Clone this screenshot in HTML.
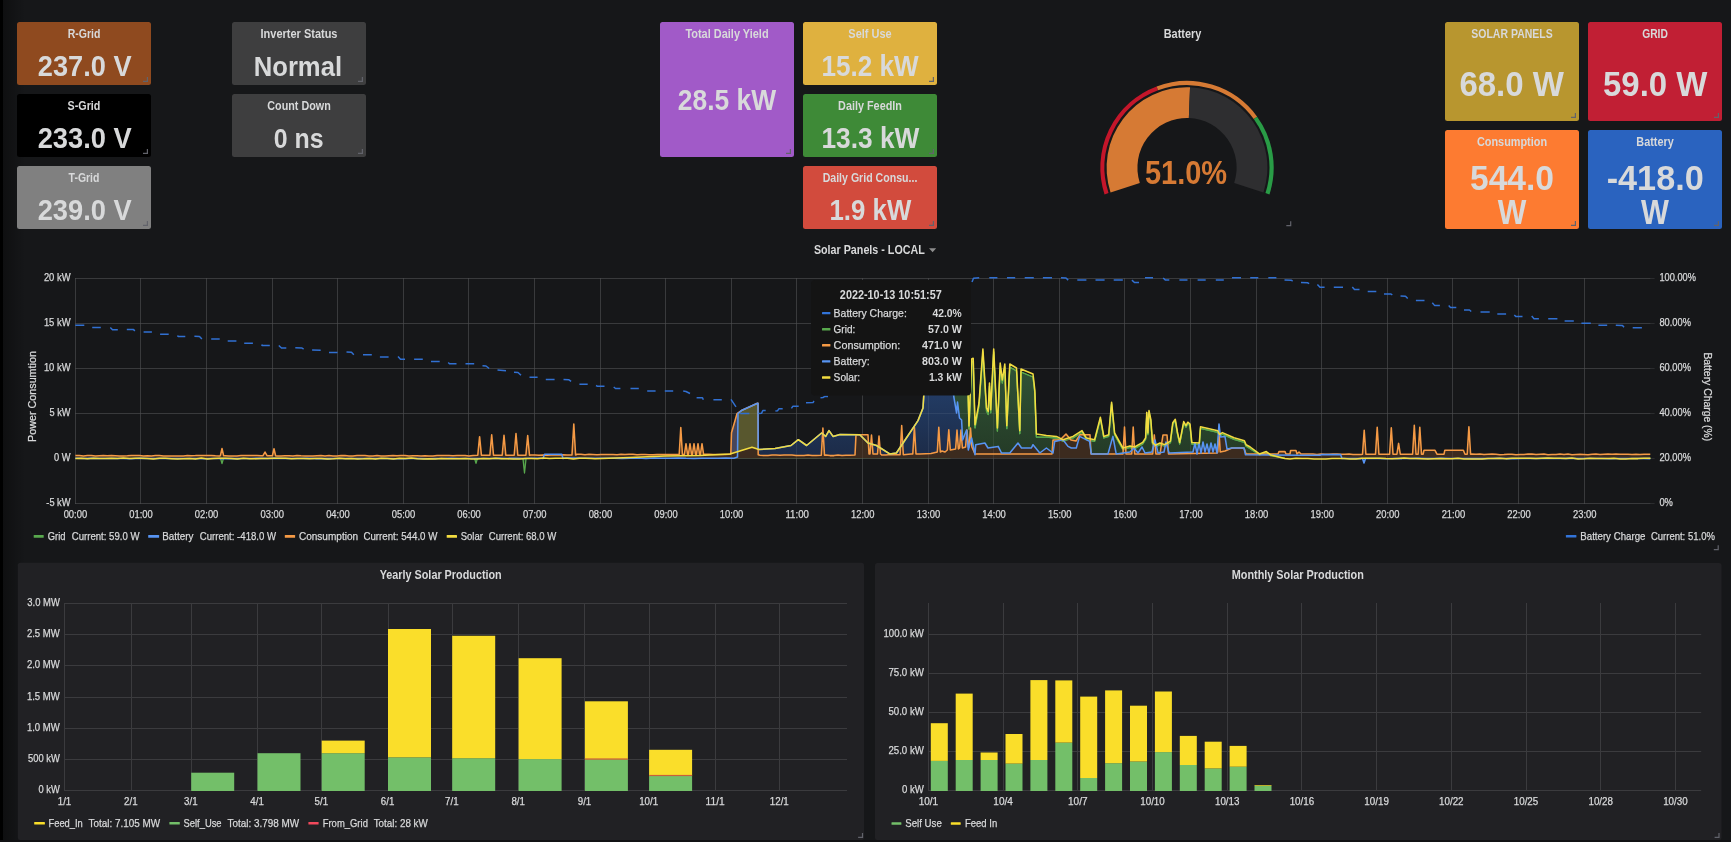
<!DOCTYPE html>
<html><head><meta charset="utf-8"><title>Solar Dashboard</title>
<style>html,body{margin:0;padding:0;background:#161719;overflow:hidden;width:1731px;height:842px}
svg{display:block;font-family:"Liberation Sans", sans-serif;will-change:transform}</style></head>
<body><svg width="1731" height="842" viewBox="0 0 1731 842">
<rect x="0" y="0" width="1731" height="842" fill="#161719"/>
<defs><linearGradient id="lsh" x1="0" y1="0" x2="1" y2="0"><stop offset="0" stop-color="#000" stop-opacity="0.35"/><stop offset="1" stop-color="#000" stop-opacity="0"/></linearGradient><linearGradient id="lshv" x1="0" y1="0" x2="0" y2="1"><stop offset="0" stop-color="#000" stop-opacity="0.2"/><stop offset="1" stop-color="#000" stop-opacity="1"/></linearGradient></defs>
<rect x="3" y="0" width="22" height="842" fill="url(#lsh)"/>
<rect x="0" y="0" width="3" height="842" fill="#000"/>
<rect x="17" y="22" width="134" height="63" rx="2.5" fill="#8f4a1f"/>
<text x="84.0" y="38.1" font-size="13.0" font-weight="bold" fill="#d8d9da" text-anchor="middle" textLength="32.7" lengthAdjust="spacingAndGlyphs" >R-Grid</text>
<text x="84.7" y="76.1" font-size="29.6" font-weight="bold" fill="#d8d9da" text-anchor="middle" textLength="93.8" lengthAdjust="spacingAndGlyphs" >237.0 V</text>
<path d="M143.0 81.4H147.4V77.0" stroke="#62636b" stroke-width="1.2" fill="none"/>
<rect x="17" y="94" width="134" height="63" rx="2.5" fill="#000000"/>
<text x="84.0" y="110.1" font-size="13.0" font-weight="bold" fill="#d8d9da" text-anchor="middle" textLength="32.8" lengthAdjust="spacingAndGlyphs" >S-Grid</text>
<text x="84.7" y="148.1" font-size="29.6" font-weight="bold" fill="#d8d9da" text-anchor="middle" textLength="94.1" lengthAdjust="spacingAndGlyphs" >233.0 V</text>
<path d="M143.0 153.4H147.4V149.0" stroke="#62636b" stroke-width="1.2" fill="none"/>
<rect x="17" y="166" width="134" height="63" rx="2.5" fill="#808080"/>
<text x="84.0" y="182.1" font-size="13.0" font-weight="bold" fill="#d8d9da" text-anchor="middle" textLength="30.8" lengthAdjust="spacingAndGlyphs" >T-Grid</text>
<text x="84.7" y="220.1" font-size="29.6" font-weight="bold" fill="#d8d9da" text-anchor="middle" textLength="94.1" lengthAdjust="spacingAndGlyphs" >239.0 V</text>
<path d="M143.0 225.4H147.4V221.0" stroke="#62636b" stroke-width="1.2" fill="none"/>
<rect x="232" y="22" width="134" height="63" rx="2.5" fill="#3e3e3f"/>
<text x="299.0" y="38.1" font-size="13.0" font-weight="bold" fill="#d8d9da" text-anchor="middle" textLength="77.0" lengthAdjust="spacingAndGlyphs" >Inverter Status</text>
<text x="297.9" y="76.3" font-size="27.8" font-weight="bold" fill="#d8d9da" text-anchor="middle" textLength="88.4" lengthAdjust="spacingAndGlyphs" >Normal</text>
<path d="M358.0 81.4H362.4V77.0" stroke="#62636b" stroke-width="1.2" fill="none"/>
<rect x="232" y="94" width="134" height="63" rx="2.5" fill="#3e3e3f"/>
<text x="299.0" y="110.1" font-size="13.0" font-weight="bold" fill="#d8d9da" text-anchor="middle" textLength="63.5" lengthAdjust="spacingAndGlyphs" >Count Down</text>
<text x="298.6" y="148.3" font-size="27.8" font-weight="bold" fill="#d8d9da" text-anchor="middle" textLength="49.9" lengthAdjust="spacingAndGlyphs" >0 ns</text>
<path d="M358.0 153.4H362.4V149.0" stroke="#62636b" stroke-width="1.2" fill="none"/>
<rect x="660" y="22" width="134" height="135" rx="2.5" fill="#a15ac8"/>
<text x="727.0" y="38.1" font-size="13.0" font-weight="bold" fill="#d8d9da" text-anchor="middle" textLength="83.2" lengthAdjust="spacingAndGlyphs" >Total Daily Yield</text>
<text x="727.0" y="109.7" font-size="29.6" font-weight="bold" fill="#d8d9da" text-anchor="middle" textLength="98.3" lengthAdjust="spacingAndGlyphs" >28.5 kW</text>
<path d="M786.0 153.4H790.4V149.0" stroke="#62636b" stroke-width="1.2" fill="none"/>
<rect x="803" y="22" width="134" height="63" rx="2.5" fill="#dfb13f"/>
<text x="870.0" y="38.1" font-size="13.0" font-weight="bold" fill="#d8d9da" text-anchor="middle" textLength="43.4" lengthAdjust="spacingAndGlyphs" >Self Use</text>
<text x="870.1" y="76.3" font-size="29.6" font-weight="bold" fill="#d8d9da" text-anchor="middle" textLength="97.2" lengthAdjust="spacingAndGlyphs" >15.2 kW</text>
<path d="M929.0 81.4H933.4V77.0" stroke="#62636b" stroke-width="1.2" fill="none"/>
<rect x="803" y="94" width="134" height="63" rx="2.5" fill="#3e8a37"/>
<text x="870.0" y="110.1" font-size="13.0" font-weight="bold" fill="#d8d9da" text-anchor="middle" textLength="63.8" lengthAdjust="spacingAndGlyphs" >Daily FeedIn</text>
<text x="870.4" y="148.3" font-size="29.6" font-weight="bold" fill="#d8d9da" text-anchor="middle" textLength="97.8" lengthAdjust="spacingAndGlyphs" >13.3 kW</text>
<path d="M929.0 153.4H933.4V149.0" stroke="#62636b" stroke-width="1.2" fill="none"/>
<rect x="803" y="166" width="134" height="63" rx="2.5" fill="#d24b3d"/>
<text x="870.0" y="182.1" font-size="13.0" font-weight="bold" fill="#d8d9da" text-anchor="middle" textLength="94.7" lengthAdjust="spacingAndGlyphs" >Daily Grid Consu...</text>
<text x="870.4" y="220.2" font-size="29.6" font-weight="bold" fill="#d8d9da" text-anchor="middle" textLength="81.8" lengthAdjust="spacingAndGlyphs" >1.9 kW</text>
<path d="M929.0 225.4H933.4V221.0" stroke="#62636b" stroke-width="1.2" fill="none"/>
<rect x="1445" y="22" width="134" height="99" rx="2.5" fill="#b8962f"/>
<text x="1512.0" y="37.8" font-size="13.0" font-weight="bold" fill="#d8d9da" text-anchor="middle" textLength="81.5" lengthAdjust="spacingAndGlyphs" >SOLAR PANELS</text>
<text x="1511.7" y="95.5" font-size="35.0" font-weight="bold" fill="#d8d9da" text-anchor="middle" textLength="104.6" lengthAdjust="spacingAndGlyphs" >68.0 W</text>
<path d="M1571.0 117.4H1575.4V113.0" stroke="#62636b" stroke-width="1.2" fill="none"/>
<rect x="1588" y="22" width="134" height="99" rx="2.5" fill="#c11f34"/>
<text x="1655.0" y="37.8" font-size="13.0" font-weight="bold" fill="#d8d9da" text-anchor="middle" textLength="25.7" lengthAdjust="spacingAndGlyphs" >GRID</text>
<text x="1655.2" y="95.5" font-size="35.0" font-weight="bold" fill="#d8d9da" text-anchor="middle" textLength="104.4" lengthAdjust="spacingAndGlyphs" >59.0 W</text>
<path d="M1714.0 117.4H1718.4V113.0" stroke="#62636b" stroke-width="1.2" fill="none"/>
<rect x="1445" y="130" width="134" height="99" rx="2.5" fill="#fd7b31"/>
<text x="1512.0" y="146.0" font-size="13.0" font-weight="bold" fill="#d8d9da" text-anchor="middle" textLength="70.1" lengthAdjust="spacingAndGlyphs" >Consumption</text>
<text x="1512.0" y="190.4" font-size="35.0" font-weight="bold" fill="#d8d9da" text-anchor="middle" textLength="84.1" lengthAdjust="spacingAndGlyphs" >544.0</text>
<text x="1512.1" y="223.8" font-size="35.0" font-weight="bold" fill="#d8d9da" text-anchor="middle" textLength="28.6" lengthAdjust="spacingAndGlyphs" >W</text>
<path d="M1571.0 225.4H1575.4V221.0" stroke="#62636b" stroke-width="1.2" fill="none"/>
<rect x="1588" y="130" width="134" height="99" rx="2.5" fill="#2a63bf"/>
<text x="1655.0" y="146.0" font-size="13.0" font-weight="bold" fill="#d8d9da" text-anchor="middle" textLength="37.4" lengthAdjust="spacingAndGlyphs" >Battery</text>
<text x="1655.2" y="190.4" font-size="35.0" font-weight="bold" fill="#d8d9da" text-anchor="middle" textLength="97.0" lengthAdjust="spacingAndGlyphs" >-418.0</text>
<text x="1655.0" y="223.8" font-size="35.0" font-weight="bold" fill="#d8d9da" text-anchor="middle" textLength="27.9" lengthAdjust="spacingAndGlyphs" >W</text>
<path d="M1714.0 225.4H1718.4V221.0" stroke="#62636b" stroke-width="1.2" fill="none"/>
<text x="1182.5" y="38.1" font-size="13.0" font-weight="bold" fill="#d8d9da" text-anchor="middle" textLength="37.7" lengthAdjust="spacingAndGlyphs" >Battery</text>
<path d="M1106.54 193.74A84.6 84.6 0 0 1 1157.34 88.37" stroke="#c4162a" stroke-width="4.2" fill="none"/>
<path d="M1157.34 88.37A84.6 84.6 0 0 1 1255.44 117.87" stroke="#d67a34" stroke-width="4.2" fill="none"/>
<path d="M1255.44 117.87A84.6 84.6 0 0 1 1267.46 193.74" stroke="#299c46" stroke-width="4.2" fill="none"/>
<path d="M1110.54 192.44A80.4 80.4 0 0 1 1190.03 87.26L1188.87 118.04A49.6 49.6 0 0 0 1139.83 182.93Z" fill="#d67a34"/>
<path d="M1190.03 87.26A80.4 80.4 0 0 1 1263.46 192.44L1234.17 182.93A49.6 49.6 0 0 0 1188.87 118.04Z" fill="#2e2e30"/>
<text x="1186.0" y="184.2" font-size="33.2" font-weight="bold" fill="#d67a34" text-anchor="middle" textLength="82.2" lengthAdjust="spacingAndGlyphs" >51.0%</text>
<path d="M1286.3 225.6H1290.7V221.2" stroke="#62636b" stroke-width="1.2" fill="none"/>
<text x="813.9" y="254.0" font-size="12.6" font-weight="bold" fill="#d8d9da" text-anchor="start" textLength="110.9" lengthAdjust="spacingAndGlyphs" >Solar Panels - LOCAL</text>
<path d="M929 248.2H936.2L932.6 252.2Z" fill="#8e8e8e"/>
<path d="M75.0 278.5H1654.6" stroke="#2b2c2e" stroke-width="1"/>
<path d="M75.0 323.5H1654.6" stroke="#2b2c2e" stroke-width="1"/>
<path d="M75.0 368.5H1654.6" stroke="#2b2c2e" stroke-width="1"/>
<path d="M75.0 413.5H1654.6" stroke="#2b2c2e" stroke-width="1"/>
<path d="M75.0 458.5H1654.6" stroke="#2b2c2e" stroke-width="1"/>
<path d="M75.0 503.5H1654.6" stroke="#2b2c2e" stroke-width="1"/>
<path d="M75.5 278.0V504.0" stroke="#2b2c2e" stroke-width="1"/>
<path d="M140.5 278.0V504.0" stroke="#2b2c2e" stroke-width="1"/>
<path d="M206.5 278.0V504.0" stroke="#2b2c2e" stroke-width="1"/>
<path d="M272.5 278.0V504.0" stroke="#2b2c2e" stroke-width="1"/>
<path d="M337.5 278.0V504.0" stroke="#2b2c2e" stroke-width="1"/>
<path d="M403.5 278.0V504.0" stroke="#2b2c2e" stroke-width="1"/>
<path d="M468.5 278.0V504.0" stroke="#2b2c2e" stroke-width="1"/>
<path d="M534.5 278.0V504.0" stroke="#2b2c2e" stroke-width="1"/>
<path d="M600.5 278.0V504.0" stroke="#2b2c2e" stroke-width="1"/>
<path d="M665.5 278.0V504.0" stroke="#2b2c2e" stroke-width="1"/>
<path d="M731.5 278.0V504.0" stroke="#2b2c2e" stroke-width="1"/>
<path d="M796.5 278.0V504.0" stroke="#2b2c2e" stroke-width="1"/>
<path d="M862.5 278.0V504.0" stroke="#2b2c2e" stroke-width="1"/>
<path d="M928.5 278.0V504.0" stroke="#2b2c2e" stroke-width="1"/>
<path d="M993.5 278.0V504.0" stroke="#2b2c2e" stroke-width="1"/>
<path d="M1059.5 278.0V504.0" stroke="#2b2c2e" stroke-width="1"/>
<path d="M1124.5 278.0V504.0" stroke="#2b2c2e" stroke-width="1"/>
<path d="M1190.5 278.0V504.0" stroke="#2b2c2e" stroke-width="1"/>
<path d="M1256.5 278.0V504.0" stroke="#2b2c2e" stroke-width="1"/>
<path d="M1321.5 278.0V504.0" stroke="#2b2c2e" stroke-width="1"/>
<path d="M1387.5 278.0V504.0" stroke="#2b2c2e" stroke-width="1"/>
<path d="M1452.5 278.0V504.0" stroke="#2b2c2e" stroke-width="1"/>
<path d="M1518.5 278.0V504.0" stroke="#2b2c2e" stroke-width="1"/>
<path d="M1584.5 278.0V504.0" stroke="#2b2c2e" stroke-width="1"/>
<text x="70.5" y="281.1" font-size="10.2" font-weight="normal" fill="#d8d9da" text-anchor="end" textLength="26.6" lengthAdjust="spacingAndGlyphs" stroke="#d8d9da" stroke-width="0.25" >20 kW</text>
<text x="70.5" y="326.1" font-size="10.2" font-weight="normal" fill="#d8d9da" text-anchor="end" textLength="26.6" lengthAdjust="spacingAndGlyphs" stroke="#d8d9da" stroke-width="0.25" >15 kW</text>
<text x="70.5" y="371.1" font-size="10.2" font-weight="normal" fill="#d8d9da" text-anchor="end" textLength="26.6" lengthAdjust="spacingAndGlyphs" stroke="#d8d9da" stroke-width="0.25" >10 kW</text>
<text x="70.5" y="416.1" font-size="10.2" font-weight="normal" fill="#d8d9da" text-anchor="end" textLength="21.0" lengthAdjust="spacingAndGlyphs" stroke="#d8d9da" stroke-width="0.25" >5 kW</text>
<text x="70.5" y="461.1" font-size="10.2" font-weight="normal" fill="#d8d9da" text-anchor="end" textLength="16.5" lengthAdjust="spacingAndGlyphs" stroke="#d8d9da" stroke-width="0.25" >0 W</text>
<text x="70.5" y="506.1" font-size="10.2" font-weight="normal" fill="#d8d9da" text-anchor="end" textLength="24.2" lengthAdjust="spacingAndGlyphs" stroke="#d8d9da" stroke-width="0.25" >-5 kW</text>
<text x="1659.4" y="281.1" font-size="10.2" font-weight="normal" fill="#d8d9da" text-anchor="start" textLength="36.5" lengthAdjust="spacingAndGlyphs" stroke="#d8d9da" stroke-width="0.25" >100.00%</text>
<text x="1659.4" y="326.1" font-size="10.2" font-weight="normal" fill="#d8d9da" text-anchor="start" textLength="31.5" lengthAdjust="spacingAndGlyphs" stroke="#d8d9da" stroke-width="0.25" >80.00%</text>
<text x="1659.4" y="371.1" font-size="10.2" font-weight="normal" fill="#d8d9da" text-anchor="start" textLength="31.5" lengthAdjust="spacingAndGlyphs" stroke="#d8d9da" stroke-width="0.25" >60.00%</text>
<text x="1659.4" y="416.1" font-size="10.2" font-weight="normal" fill="#d8d9da" text-anchor="start" textLength="31.5" lengthAdjust="spacingAndGlyphs" stroke="#d8d9da" stroke-width="0.25" >40.00%</text>
<text x="1659.4" y="461.1" font-size="10.2" font-weight="normal" fill="#d8d9da" text-anchor="start" textLength="31.5" lengthAdjust="spacingAndGlyphs" stroke="#d8d9da" stroke-width="0.25" >20.00%</text>
<text x="1659.4" y="506.1" font-size="10.2" font-weight="normal" fill="#d8d9da" text-anchor="start" textLength="13.5" lengthAdjust="spacingAndGlyphs" stroke="#d8d9da" stroke-width="0.25" >0%</text>
<text x="75.4" y="518.2" font-size="10.2" font-weight="normal" fill="#d8d9da" text-anchor="middle" textLength="23.5" lengthAdjust="spacingAndGlyphs" stroke="#d8d9da" stroke-width="0.25" >00:00</text>
<text x="141.0" y="518.2" font-size="10.2" font-weight="normal" fill="#d8d9da" text-anchor="middle" textLength="23.5" lengthAdjust="spacingAndGlyphs" stroke="#d8d9da" stroke-width="0.25" >01:00</text>
<text x="206.6" y="518.2" font-size="10.2" font-weight="normal" fill="#d8d9da" text-anchor="middle" textLength="23.5" lengthAdjust="spacingAndGlyphs" stroke="#d8d9da" stroke-width="0.25" >02:00</text>
<text x="272.3" y="518.2" font-size="10.2" font-weight="normal" fill="#d8d9da" text-anchor="middle" textLength="23.5" lengthAdjust="spacingAndGlyphs" stroke="#d8d9da" stroke-width="0.25" >03:00</text>
<text x="337.9" y="518.2" font-size="10.2" font-weight="normal" fill="#d8d9da" text-anchor="middle" textLength="23.5" lengthAdjust="spacingAndGlyphs" stroke="#d8d9da" stroke-width="0.25" >04:00</text>
<text x="403.5" y="518.2" font-size="10.2" font-weight="normal" fill="#d8d9da" text-anchor="middle" textLength="23.5" lengthAdjust="spacingAndGlyphs" stroke="#d8d9da" stroke-width="0.25" >05:00</text>
<text x="469.1" y="518.2" font-size="10.2" font-weight="normal" fill="#d8d9da" text-anchor="middle" textLength="23.5" lengthAdjust="spacingAndGlyphs" stroke="#d8d9da" stroke-width="0.25" >06:00</text>
<text x="534.7" y="518.2" font-size="10.2" font-weight="normal" fill="#d8d9da" text-anchor="middle" textLength="23.5" lengthAdjust="spacingAndGlyphs" stroke="#d8d9da" stroke-width="0.25" >07:00</text>
<text x="600.4" y="518.2" font-size="10.2" font-weight="normal" fill="#d8d9da" text-anchor="middle" textLength="23.5" lengthAdjust="spacingAndGlyphs" stroke="#d8d9da" stroke-width="0.25" >08:00</text>
<text x="666.0" y="518.2" font-size="10.2" font-weight="normal" fill="#d8d9da" text-anchor="middle" textLength="23.5" lengthAdjust="spacingAndGlyphs" stroke="#d8d9da" stroke-width="0.25" >09:00</text>
<text x="731.6" y="518.2" font-size="10.2" font-weight="normal" fill="#d8d9da" text-anchor="middle" textLength="23.5" lengthAdjust="spacingAndGlyphs" stroke="#d8d9da" stroke-width="0.25" >10:00</text>
<text x="797.2" y="518.2" font-size="10.2" font-weight="normal" fill="#d8d9da" text-anchor="middle" textLength="23.5" lengthAdjust="spacingAndGlyphs" stroke="#d8d9da" stroke-width="0.25" >11:00</text>
<text x="862.8" y="518.2" font-size="10.2" font-weight="normal" fill="#d8d9da" text-anchor="middle" textLength="23.5" lengthAdjust="spacingAndGlyphs" stroke="#d8d9da" stroke-width="0.25" >12:00</text>
<text x="928.5" y="518.2" font-size="10.2" font-weight="normal" fill="#d8d9da" text-anchor="middle" textLength="23.5" lengthAdjust="spacingAndGlyphs" stroke="#d8d9da" stroke-width="0.25" >13:00</text>
<text x="994.1" y="518.2" font-size="10.2" font-weight="normal" fill="#d8d9da" text-anchor="middle" textLength="23.5" lengthAdjust="spacingAndGlyphs" stroke="#d8d9da" stroke-width="0.25" >14:00</text>
<text x="1059.7" y="518.2" font-size="10.2" font-weight="normal" fill="#d8d9da" text-anchor="middle" textLength="23.5" lengthAdjust="spacingAndGlyphs" stroke="#d8d9da" stroke-width="0.25" >15:00</text>
<text x="1125.3" y="518.2" font-size="10.2" font-weight="normal" fill="#d8d9da" text-anchor="middle" textLength="23.5" lengthAdjust="spacingAndGlyphs" stroke="#d8d9da" stroke-width="0.25" >16:00</text>
<text x="1190.9" y="518.2" font-size="10.2" font-weight="normal" fill="#d8d9da" text-anchor="middle" textLength="23.5" lengthAdjust="spacingAndGlyphs" stroke="#d8d9da" stroke-width="0.25" >17:00</text>
<text x="1256.6" y="518.2" font-size="10.2" font-weight="normal" fill="#d8d9da" text-anchor="middle" textLength="23.5" lengthAdjust="spacingAndGlyphs" stroke="#d8d9da" stroke-width="0.25" >18:00</text>
<text x="1322.2" y="518.2" font-size="10.2" font-weight="normal" fill="#d8d9da" text-anchor="middle" textLength="23.5" lengthAdjust="spacingAndGlyphs" stroke="#d8d9da" stroke-width="0.25" >19:00</text>
<text x="1387.8" y="518.2" font-size="10.2" font-weight="normal" fill="#d8d9da" text-anchor="middle" textLength="23.5" lengthAdjust="spacingAndGlyphs" stroke="#d8d9da" stroke-width="0.25" >20:00</text>
<text x="1453.4" y="518.2" font-size="10.2" font-weight="normal" fill="#d8d9da" text-anchor="middle" textLength="23.5" lengthAdjust="spacingAndGlyphs" stroke="#d8d9da" stroke-width="0.25" >21:00</text>
<text x="1519.0" y="518.2" font-size="10.2" font-weight="normal" fill="#d8d9da" text-anchor="middle" textLength="23.5" lengthAdjust="spacingAndGlyphs" stroke="#d8d9da" stroke-width="0.25" >22:00</text>
<text x="1584.7" y="518.2" font-size="10.2" font-weight="normal" fill="#d8d9da" text-anchor="middle" textLength="23.5" lengthAdjust="spacingAndGlyphs" stroke="#d8d9da" stroke-width="0.25" >23:00</text>
<text x="0.0" y="0.0" font-size="11.6" font-weight="normal" fill="#d8d9da" text-anchor="middle" textLength="90.8" lengthAdjust="spacingAndGlyphs" stroke="#d8d9da" stroke-width="0.25" transform="translate(35.6 396.5) rotate(-90)">Power Consumtion</text>
<text x="0.0" y="0.0" font-size="11.6" font-weight="normal" fill="#d8d9da" text-anchor="middle" textLength="88.8" lengthAdjust="spacingAndGlyphs" stroke="#d8d9da" stroke-width="0.25" transform="translate(1704.4 396.8) rotate(90)">Battery Charge (%)</text>
<defs><linearGradient id="gG" gradientUnits="userSpaceOnUse" x1="0" y1="345" x2="0" y2="458"><stop offset="0" stop-color="#33593a"/><stop offset="1" stop-color="#243a26"/></linearGradient><linearGradient id="gB" gradientUnits="userSpaceOnUse" x1="0" y1="375" x2="0" y2="458"><stop offset="0" stop-color="#24406c"/><stop offset="1" stop-color="#1c2b47"/></linearGradient></defs>
<path d="M75.4 458.0 L83.4 458.0 L91.4 457.6 L99.4 457.7 L107.4 457.8 L115.4 458.0 L123.4 457.8 L131.4 457.9 L139.4 457.6 L147.4 457.6 L155.4 457.8 L163.4 458.0 L171.4 458.0 L179.4 458.0 L187.4 457.8 L195.4 457.9 L203.4 457.9 L211.4 457.9 L220.4 457.9 L222.0 463.6 L223.6 457.9 L272.0 457.9 L274.0 454.5 L276.0 457.9 L280.0 457.7 L288.0 458.1 L296.0 457.7 L304.0 458.2 L312.0 458.2 L320.0 457.6 L328.0 457.9 L336.0 458.1 L344.0 458.2 L352.0 457.9 L360.0 457.8 L368.0 457.7 L376.0 458.2 L384.0 457.7 L392.0 457.9 L400.0 457.7 L408.0 457.9 L416.0 458.2 L424.0 457.7 L432.0 458.1 L440.0 457.9 L448.0 458.1 L456.0 458.0 L464.0 457.7 L472.0 458.1 L474.4 457.9 L476.0 463.3 L477.6 457.9 L480.0 457.9 L488.0 457.6 L496.0 457.6 L504.0 457.9 L512.0 457.9 L520.0 457.8 L522.9 457.9 L524.5 473.0 L526.1 457.9 L528.0 457.7 L536.0 457.8 L544.0 457.8 L552.0 458.1 L560.0 457.6 L568.0 458.1 L576.0 458.1 L584.0 457.7 L592.0 458.2 L600.0 458.0 L608.0 458.1 L616.0 457.8 L624.0 457.8 L632.0 457.8 L640.0 458.2 L648.0 458.0 L656.0 457.8 L664.0 457.9 L672.0 457.8 L680.0 457.6 L688.0 457.7 L696.0 458.1 L704.0 457.8 L712.0 458.2 L720.0 457.7 L728.0 457.8 L736.0 457.9 L744.0 457.7 L752.0 457.8 L760.0 458.2 L768.0 458.1 L776.0 458.1 L784.0 458.0 L792.0 458.1 L800.0 458.2 L808.0 457.9 L816.0 458.0 L824.0 457.6 L832.0 458.0 L840.0 457.9 L848.0 458.1 L856.0 458.0 L864.0 457.8 L872.0 457.6 L880.0 458.2 L888.0 457.7 L896.0 457.9 L904.0 457.8 L912.0 457.8 L920.0 458.0 L928.0 458.2 L936.0 457.8 L944.0 458.0 L950.0 457.9 L954.0 390.0 L968.0 390.0 L969.0 429.0 L971.6 362.0 L973.2 361.3 L975.0 427.8 L979.0 406.0 L982.9 352.0 L986.5 411.0 L988.2 414.5 L989.5 386.0 L990.7 412.8 L993.7 352.0 L997.4 431.0 L1000.2 366.0 L1002.3 383.0 L1004.8 367.0 L1006.8 428.6 L1009.8 367.0 L1016.5 371.0 L1019.8 433.6 L1021.0 372.0 L1033.0 377.0 L1034.8 393.0 L1036.4 437.0 L1046.4 437.2 L1056.4 438.0 L1063.0 441.3 L1073.0 438.0 L1082.0 432.2 L1086.3 439.6 L1094.6 441.3 L1100.4 418.9 L1103.8 438.0 L1108.7 436.3 L1111.6 403.9 L1114.6 434.6 L1122.9 449.6 L1130.0 447.5 L1134.6 448.6 L1142.7 444.0 L1145.6 439.4 L1146.8 414.0 L1147.9 434.6 L1149.0 412.2 L1150.8 420.9 L1152.5 444.0 L1155.4 446.9 L1160.0 444.6 L1164.7 446.3 L1170.4 442.8 L1172.8 424.3 L1175.3 420.9 L1177.4 433.6 L1179.7 444.0 L1183.7 423.2 L1186.0 427.2 L1187.8 423.8 L1190.0 425.6 L1191.8 444.0 L1199.3 444.6 L1200.5 428.4 L1217.8 432.4 L1219.5 435.9 L1222.4 434.2 L1234.0 439.4 L1244.4 442.3 L1246.1 446.3 L1250.2 448.6 L1259.4 454.8 L1266.3 452.6 L1271.0 455.9 L1285.0 458.2 L1290.0 457.8 L1298.0 457.9 L1306.0 457.8 L1314.0 457.7 L1322.0 457.7 L1330.0 457.7 L1338.0 458.1 L1346.0 457.9 L1354.0 457.7 L1362.0 458.1 L1370.0 458.2 L1378.0 457.9 L1386.0 457.7 L1394.0 457.7 L1402.0 457.7 L1410.0 457.8 L1418.0 457.7 L1426.0 457.7 L1434.0 457.8 L1442.0 457.9 L1450.0 458.1 L1458.0 458.0 L1466.0 457.8 L1474.0 457.8 L1482.0 457.9 L1490.0 457.8 L1498.0 457.8 L1506.0 457.6 L1514.0 457.8 L1522.0 458.2 L1530.0 457.7 L1538.0 457.9 L1546.0 458.0 L1554.0 458.1 L1562.0 457.7 L1570.0 457.8 L1578.0 457.7 L1586.0 457.8 L1594.0 457.9 L1602.0 458.2 L1610.0 458.1 L1618.0 458.1 L1626.0 457.6 L1634.0 457.6 L1642.0 458.0 L1650.0 458.1 L1650.3 457.9 L1650.3 458.4 L75.4 458.4 Z" fill="url(#gG)"/>
<path d="M75.4 458.0 L83.4 458.0 L91.4 457.6 L99.4 457.7 L107.4 457.8 L115.4 458.0 L123.4 457.8 L131.4 457.9 L139.4 457.6 L147.4 457.6 L155.4 457.8 L163.4 458.0 L171.4 458.0 L179.4 458.0 L187.4 457.8 L195.4 457.9 L203.4 457.9 L211.4 457.9 L220.4 457.9 L222.0 463.6 L223.6 457.9 L272.0 457.9 L274.0 454.5 L276.0 457.9 L280.0 457.7 L288.0 458.1 L296.0 457.7 L304.0 458.2 L312.0 458.2 L320.0 457.6 L328.0 457.9 L336.0 458.1 L344.0 458.2 L352.0 457.9 L360.0 457.8 L368.0 457.7 L376.0 458.2 L384.0 457.7 L392.0 457.9 L400.0 457.7 L408.0 457.9 L416.0 458.2 L424.0 457.7 L432.0 458.1 L440.0 457.9 L448.0 458.1 L456.0 458.0 L464.0 457.7 L472.0 458.1 L474.4 457.9 L476.0 463.3 L477.6 457.9 L480.0 457.9 L488.0 457.6 L496.0 457.6 L504.0 457.9 L512.0 457.9 L520.0 457.8 L522.9 457.9 L524.5 473.0 L526.1 457.9 L528.0 457.7 L536.0 457.8 L544.0 457.8 L552.0 458.1 L560.0 457.6 L568.0 458.1 L576.0 458.1 L584.0 457.7 L592.0 458.2 L600.0 458.0 L608.0 458.1 L616.0 457.8 L624.0 457.8 L632.0 457.8 L640.0 458.2 L648.0 458.0 L656.0 457.8 L664.0 457.9 L672.0 457.8 L680.0 457.6 L688.0 457.7 L696.0 458.1 L704.0 457.8 L712.0 458.2 L720.0 457.7 L728.0 457.8 L736.0 457.9 L744.0 457.7 L752.0 457.8 L760.0 458.2 L768.0 458.1 L776.0 458.1 L784.0 458.0 L792.0 458.1 L800.0 458.2 L808.0 457.9 L816.0 458.0 L824.0 457.6 L832.0 458.0 L840.0 457.9 L848.0 458.1 L856.0 458.0 L864.0 457.8 L872.0 457.6 L880.0 458.2 L888.0 457.7 L896.0 457.9 L904.0 457.8 L912.0 457.8 L920.0 458.0 L928.0 458.2 L936.0 457.8 L944.0 458.0 L950.0 457.9 L954.0 390.0 L968.0 390.0 L969.0 429.0 L971.6 362.0 L973.2 361.3 L975.0 427.8 L979.0 406.0 L982.9 352.0 L986.5 411.0 L988.2 414.5 L989.5 386.0 L990.7 412.8 L993.7 352.0 L997.4 431.0 L1000.2 366.0 L1002.3 383.0 L1004.8 367.0 L1006.8 428.6 L1009.8 367.0 L1016.5 371.0 L1019.8 433.6 L1021.0 372.0 L1033.0 377.0 L1034.8 393.0 L1036.4 437.0 L1046.4 437.2 L1056.4 438.0 L1063.0 441.3 L1073.0 438.0 L1082.0 432.2 L1086.3 439.6 L1094.6 441.3 L1100.4 418.9 L1103.8 438.0 L1108.7 436.3 L1111.6 403.9 L1114.6 434.6 L1122.9 449.6 L1130.0 447.5 L1134.6 448.6 L1142.7 444.0 L1145.6 439.4 L1146.8 414.0 L1147.9 434.6 L1149.0 412.2 L1150.8 420.9 L1152.5 444.0 L1155.4 446.9 L1160.0 444.6 L1164.7 446.3 L1170.4 442.8 L1172.8 424.3 L1175.3 420.9 L1177.4 433.6 L1179.7 444.0 L1183.7 423.2 L1186.0 427.2 L1187.8 423.8 L1190.0 425.6 L1191.8 444.0 L1199.3 444.6 L1200.5 428.4 L1217.8 432.4 L1219.5 435.9 L1222.4 434.2 L1234.0 439.4 L1244.4 442.3 L1246.1 446.3 L1250.2 448.6 L1259.4 454.8 L1266.3 452.6 L1271.0 455.9 L1285.0 458.2 L1290.0 457.8 L1298.0 457.9 L1306.0 457.8 L1314.0 457.7 L1322.0 457.7 L1330.0 457.7 L1338.0 458.1 L1346.0 457.9 L1354.0 457.7 L1362.0 458.1 L1370.0 458.2 L1378.0 457.9 L1386.0 457.7 L1394.0 457.7 L1402.0 457.7 L1410.0 457.8 L1418.0 457.7 L1426.0 457.7 L1434.0 457.8 L1442.0 457.9 L1450.0 458.1 L1458.0 458.0 L1466.0 457.8 L1474.0 457.8 L1482.0 457.9 L1490.0 457.8 L1498.0 457.8 L1506.0 457.6 L1514.0 457.8 L1522.0 458.2 L1530.0 457.7 L1538.0 457.9 L1546.0 458.0 L1554.0 458.1 L1562.0 457.7 L1570.0 457.8 L1578.0 457.7 L1586.0 457.8 L1594.0 457.9 L1602.0 458.2 L1610.0 458.1 L1618.0 458.1 L1626.0 457.6 L1634.0 457.6 L1642.0 458.0 L1650.0 458.1 L1650.3 457.9" stroke="#58a84d" stroke-width="1.3" fill="none" stroke-linejoin="round"/>
<path d="M75.4 458.3 L83.4 458.4 L91.4 458.3 L99.4 458.6 L107.4 458.5 L115.4 458.4 L123.4 458.5 L131.4 458.7 L139.4 458.3 L147.4 458.6 L155.4 458.5 L163.4 458.5 L171.4 458.6 L179.4 458.5 L187.4 458.5 L195.4 458.6 L203.4 458.7 L211.4 458.4 L219.4 458.6 L227.4 458.6 L235.4 458.6 L243.4 458.5 L251.4 458.4 L259.4 458.3 L267.4 458.4 L275.4 458.3 L283.4 458.6 L291.4 458.4 L299.4 458.4 L307.4 458.3 L315.4 458.6 L323.4 458.6 L331.4 458.6 L339.4 458.4 L347.4 458.4 L355.4 458.4 L363.4 458.5 L371.4 458.4 L379.4 458.5 L387.4 458.4 L395.4 458.7 L403.4 458.7 L411.4 458.5 L419.4 458.4 L427.4 458.7 L435.4 458.4 L443.4 458.4 L451.4 458.3 L459.4 458.5 L467.4 458.5 L475.4 458.5 L483.4 458.4 L491.4 458.5 L499.4 458.3 L507.4 458.4 L515.4 458.3 L523.4 458.5 L531.4 458.3 L539.4 458.3 L543.0 458.5 L544.5 454.3 L561.8 454.3 L563.0 458.5 L566.0 458.1 L574.0 458.1 L582.0 458.2 L590.0 458.2 L598.0 458.3 L606.0 458.3 L614.0 458.3 L622.0 458.4 L630.0 458.2 L638.0 458.1 L646.0 458.4 L654.0 458.1 L662.0 458.3 L670.0 458.3 L678.0 458.0 L686.0 458.3 L694.0 458.4 L702.0 458.3 L710.0 458.3 L718.0 458.3 L726.0 458.1 L734.0 458.2 L737.5 457.0 L738.0 413.7 L742.0 410.2 L757.5 403.3 L758.0 403.3 L758.2 449.5 L775.0 448.5 L791.0 445.5 L798.3 439.7 L806.6 445.5 L821.6 433.0 L825.7 436.4 L829.0 430.6 L833.0 436.4 L840.0 434.4 L859.8 434.7 L868.0 443.0 L876.5 445.5 L889.7 453.9 L896.4 453.0 L906.4 438.0 L918.0 420.6 L923.0 408.0 L924.0 392.0 L925.0 375.0 L953.0 375.0 L953.6 395.7 L956.6 413.0 L957.5 402.0 L959.5 418.0 L961.6 420.0 L962.6 440.0 L966.6 430.0 L968.3 450.0 L971.6 438.0 L975.0 454.7 L975.7 444.7 L984.9 443.0 L988.0 448.0 L998.2 446.4 L1001.5 453.0 L1009.8 453.0 L1018.0 443.0 L1021.5 448.0 L1031.4 448.0 L1033.0 444.7 L1039.8 453.0 L1046.4 448.0 L1053.0 453.0 L1054.7 441.4 L1063.0 439.7 L1068.0 446.4 L1071.3 448.0 L1076.3 448.0 L1079.6 436.4 L1089.6 441.4 L1091.3 453.9 L1108.0 453.9 L1112.9 436.4 L1116.2 453.9 L1130.0 452.0 L1134.0 448.0 L1138.0 453.0 L1142.0 447.0 L1145.0 453.0 L1152.0 452.0 L1155.0 440.0 L1158.0 453.0 L1164.0 452.0 L1166.0 442.0 L1169.0 453.0 L1193.0 452.0 L1195.0 443.0 L1197.0 454.0 L1199.0 443.0 L1201.0 453.0 L1203.0 442.0 L1205.0 452.0 L1207.0 444.0 L1209.0 453.0 L1211.0 443.0 L1213.0 452.0 L1215.0 444.0 L1217.0 453.0 L1219.0 424.0 L1220.5 437.0 L1225.0 436.6 L1227.0 449.0 L1232.0 448.0 L1244.0 448.0 L1245.5 454.8 L1300.0 455.3 L1320.0 455.3 L1322.0 454.6 L1340.6 454.6 L1342.0 458.5 L1345.0 458.5 L1353.0 458.6 L1361.0 458.6 L1362.5 458.5 L1364.0 463.0 L1365.5 458.5 L1370.0 458.6 L1378.0 458.5 L1386.0 458.7 L1394.0 458.6 L1402.0 458.6 L1410.0 458.4 L1418.0 458.3 L1426.0 458.4 L1434.0 458.4 L1442.0 458.3 L1450.0 458.6 L1458.0 458.5 L1466.0 458.6 L1474.0 458.6 L1482.0 458.6 L1490.0 458.5 L1498.0 458.3 L1506.0 458.6 L1514.0 458.6 L1522.0 458.5 L1530.0 458.5 L1538.0 458.6 L1546.0 458.3 L1554.0 458.6 L1562.0 458.4 L1570.0 458.3 L1578.0 458.4 L1586.0 458.6 L1594.0 458.4 L1602.0 458.6 L1610.0 458.7 L1618.0 458.5 L1626.0 458.5 L1634.0 458.5 L1642.0 458.6 L1650.0 458.6 L1650.3 458.5 L1650.3 458.4 L75.4 458.4 Z" fill="url(#gB)"/>
<path d="M75.4 455.6 L75.9 455.6 L76.4 455.6 L76.9 455.6 L77.4 455.6 L77.9 455.6 L78.4 455.5 L78.9 455.5 L79.4 455.5 L79.9 455.6 L80.4 455.6 L80.9 455.7 L81.4 455.7 L81.9 455.8 L82.4 455.8 L82.9 455.9 L83.4 455.9 L83.9 455.9 L84.4 455.8 L84.9 455.8 L85.4 455.7 L85.9 455.6 L86.4 455.6 L86.9 455.5 L87.4 455.5 L87.9 455.5 L88.4 455.4 L88.9 455.4 L89.4 455.4 L89.9 455.4 L90.4 455.4 L90.9 455.4 L91.4 455.4 L91.9 455.4 L92.4 455.5 L92.9 455.6 L93.4 455.7 L93.9 455.8 L94.4 455.9 L94.9 455.9 L95.4 456.0 L95.9 456.0 L96.4 455.9 L96.9 455.9 L97.4 455.9 L97.9 455.8 L98.4 455.8 L98.9 455.8 L99.4 455.7 L99.9 455.7 L100.4 455.7 L100.9 455.6 L101.4 455.6 L101.9 455.6 L102.4 455.5 L102.9 455.5 L103.4 455.5 L103.9 455.5 L104.4 455.5 L104.9 455.6 L105.4 455.6 L105.9 455.6 L106.4 455.7 L106.9 455.7 L107.4 455.7 L107.9 455.7 L108.4 455.6 L108.9 455.6 L109.4 455.5 L109.9 455.5 L110.4 455.5 L110.9 455.4 L111.4 455.4 L111.9 455.4 L112.4 455.5 L112.9 455.5 L113.4 455.5 L113.9 455.6 L114.4 455.6 L114.9 455.7 L115.4 455.7 L115.9 455.8 L116.4 455.8 L116.9 455.8 L117.4 455.9 L117.9 455.9 L118.4 456.0 L118.9 456.0 L119.4 456.0 L119.9 456.0 L120.4 456.0 L120.9 456.0 L121.4 456.0 L121.9 456.0 L122.4 456.0 L122.9 456.0 L123.4 456.0 L123.9 455.9 L124.4 455.9 L124.9 455.9 L125.4 455.9 L125.9 455.9 L126.4 455.9 L126.9 455.9 L127.4 455.8 L127.9 455.8 L128.4 455.8 L128.9 455.7 L129.4 455.7 L129.9 455.6 L130.4 455.6 L130.9 455.6 L131.4 455.5 L131.9 455.5 L132.4 455.6 L132.9 455.6 L133.4 455.6 L133.9 455.6 L134.4 455.6 L134.9 455.6 L135.4 455.6 L135.9 455.6 L136.4 455.6 L136.9 455.6 L137.4 455.5 L137.9 455.5 L138.4 455.5 L138.9 455.5 L139.4 455.5 L139.9 455.5 L140.4 455.6 L140.9 455.6 L141.4 455.7 L141.9 455.7 L142.4 455.8 L142.9 455.8 L143.4 455.9 L143.9 455.9 L144.4 455.8 L144.9 455.8 L145.4 455.8 L145.9 455.8 L146.4 455.8 L146.9 455.7 L147.4 455.7 L147.9 455.7 L148.4 455.8 L148.9 455.8 L149.4 455.8 L149.9 455.8 L150.4 455.9 L150.9 455.9 L151.4 455.9 L151.9 455.9 L152.4 455.8 L152.9 455.8 L153.4 455.7 L153.9 455.7 L154.4 455.7 L154.9 455.6 L155.4 455.6 L155.9 455.6 L156.4 455.6 L156.9 455.6 L157.4 455.5 L157.9 455.5 L158.4 455.5 L158.9 455.5 L159.4 455.5 L159.9 455.6 L160.4 455.6 L160.9 455.7 L161.4 455.7 L161.9 455.8 L162.4 455.8 L162.9 455.9 L163.4 455.9 L163.9 455.9 L164.4 455.9 L164.9 456.0 L165.4 456.0 L165.9 456.0 L166.4 456.0 L166.9 456.0 L167.4 456.0 L167.9 456.0 L168.4 456.0 L168.9 456.0 L169.4 456.0 L169.9 456.0 L170.4 456.0 L170.9 456.0 L171.4 455.9 L171.9 455.9 L172.4 455.9 L172.9 455.9 L173.4 455.9 L173.9 455.9 L174.4 455.9 L174.9 455.9 L175.4 455.9 L175.9 455.9 L176.4 455.9 L176.9 455.9 L177.4 455.9 L177.9 455.9 L178.4 455.9 L178.9 455.9 L179.4 455.9 L179.9 455.9 L180.4 455.9 L180.9 455.9 L181.4 455.9 L181.9 455.9 L182.4 455.9 L182.9 455.9 L183.4 455.9 L183.9 455.8 L184.4 455.8 L184.9 455.7 L185.4 455.7 L185.9 455.6 L186.4 455.6 L186.9 455.6 L187.4 455.5 L187.9 455.5 L188.4 455.6 L188.9 455.6 L189.4 455.6 L189.9 455.6 L190.4 455.7 L190.9 455.7 L191.4 455.7 L191.9 455.7 L192.4 455.7 L192.9 455.7 L193.4 455.7 L193.9 455.6 L194.4 455.6 L194.9 455.6 L195.4 455.6 L195.9 455.6 L196.4 455.5 L196.9 455.5 L197.4 455.5 L197.9 455.5 L198.4 455.4 L198.9 455.4 L199.4 455.4 L199.9 455.4 L200.4 455.4 L200.9 455.4 L201.4 455.4 L201.9 455.4 L202.4 455.4 L202.9 455.4 L203.4 455.4 L203.9 455.4 L204.4 455.4 L204.9 455.4 L205.4 455.5 L205.9 455.5 L206.4 455.5 L206.9 455.5 L207.4 455.5 L207.9 455.5 L208.4 455.5 L208.9 455.5 L209.4 455.5 L209.9 455.5 L210.4 455.5 L210.9 455.5 L211.4 455.5 L211.9 455.6 L212.4 455.6 L212.9 455.6 L213.4 455.7 L213.9 455.7 L214.4 455.8 L214.9 455.8 L215.4 455.8 L215.9 455.9 L216.4 455.9 L216.9 455.9 L217.4 455.9 L217.9 456.0 L218.4 456.0 L218.9 456.0 L219.4 456.0 L219.9 455.9 L220.4 455.7 L220.9 453.4 L221.4 451.2 L221.9 448.9 L222.4 450.3 L222.9 452.6 L223.4 454.8 L223.9 455.7 L224.4 455.7 L224.9 455.7 L225.4 455.7 L225.9 455.7 L226.4 455.8 L226.9 455.8 L227.4 455.9 L227.9 455.9 L228.4 456.0 L228.9 456.0 L229.4 456.0 L229.9 456.0 L230.4 456.0 L230.9 456.0 L231.4 456.0 L231.9 456.0 L232.4 456.0 L232.9 456.0 L233.4 456.0 L233.9 456.0 L234.4 456.0 L234.9 456.0 L235.4 456.0 L235.9 456.0 L236.4 456.0 L236.9 456.0 L237.4 456.0 L237.9 455.9 L238.4 455.9 L238.9 455.8 L239.4 455.8 L239.9 455.7 L240.4 455.7 L240.9 455.6 L241.4 455.6 L241.9 455.6 L242.4 455.6 L242.9 455.6 L243.4 455.5 L243.9 455.5 L244.4 455.5 L244.9 455.5 L245.4 455.5 L245.9 455.5 L246.4 455.5 L246.9 455.5 L247.4 455.5 L247.9 455.5 L248.4 455.5 L248.9 455.5 L249.4 455.5 L249.9 455.5 L250.4 455.5 L250.9 455.5 L251.4 455.5 L251.9 455.5 L252.4 455.5 L252.9 455.5 L253.4 455.5 L253.9 455.5 L254.4 455.5 L254.9 455.5 L255.4 455.5 L255.9 455.5 L256.4 455.5 L256.9 455.5 L257.4 455.5 L257.9 455.6 L258.4 455.6 L258.9 455.6 L259.4 455.7 L259.9 455.7 L260.4 455.7 L260.9 455.8 L261.4 455.8 L261.9 455.7 L262.4 455.7 L262.9 455.7 L263.4 455.0 L263.9 454.0 L264.4 453.1 L264.9 452.2 L265.4 452.7 L265.9 453.7 L266.4 454.6 L266.9 455.5 L267.4 455.7 L267.9 455.7 L268.4 455.7 L268.9 455.7 L269.4 455.7 L269.9 455.7 L270.4 455.7 L270.9 455.7 L271.4 455.7 L271.9 455.7 L272.4 455.7 L272.9 453.5 L273.4 451.4 L273.9 449.2 L274.4 450.5 L274.9 452.7 L275.4 454.8 L275.9 455.8 L276.4 455.9 L276.9 456.0 L277.4 456.0 L277.9 456.0 L278.4 456.0 L278.9 456.0 L279.4 456.0 L279.9 455.9 L280.4 455.9 L280.9 455.9 L281.4 455.9 L281.9 455.9 L282.4 455.8 L282.9 455.8 L283.4 455.8 L283.9 455.8 L284.4 455.7 L284.9 455.7 L285.4 455.7 L285.9 455.7 L286.4 455.7 L286.9 455.7 L287.4 455.8 L287.9 455.8 L288.4 455.8 L288.9 455.8 L289.4 455.8 L289.9 455.8 L290.4 455.8 L290.9 455.9 L291.4 455.9 L291.9 455.9 L292.4 455.9 L292.9 455.9 L293.4 455.9 L293.9 455.8 L294.4 455.7 L294.9 455.7 L295.4 455.6 L295.9 455.5 L296.4 455.5 L296.9 455.4 L297.4 455.4 L297.9 455.5 L298.4 455.6 L298.9 455.6 L299.4 455.7 L299.9 455.7 L300.4 455.8 L300.9 455.8 L301.4 455.8 L301.9 455.9 L302.4 455.9 L302.9 455.9 L303.4 455.9 L303.9 455.9 L304.4 456.0 L304.9 456.0 L305.4 456.0 L305.9 456.0 L306.4 456.0 L306.9 455.9 L307.4 455.9 L307.9 455.9 L308.4 455.9 L308.9 455.9 L309.4 455.9 L309.9 455.9 L310.4 455.9 L310.9 455.9 L311.4 455.9 L311.9 455.9 L312.4 455.9 L312.9 455.9 L313.4 455.9 L313.9 455.8 L314.4 455.8 L314.9 455.8 L315.4 455.8 L315.9 455.7 L316.4 455.7 L316.9 455.7 L317.4 455.7 L317.9 455.6 L318.4 455.6 L318.9 455.6 L319.4 455.6 L319.9 455.5 L320.4 455.5 L320.9 455.5 L321.4 455.5 L321.9 455.6 L322.4 455.6 L322.9 455.7 L323.4 455.7 L323.9 455.8 L324.4 455.8 L324.9 455.9 L325.4 455.9 L325.9 455.8 L326.4 455.8 L326.9 455.8 L327.4 455.7 L327.9 455.7 L328.4 455.6 L328.9 455.6 L329.4 455.6 L329.9 455.7 L330.4 455.7 L330.9 455.7 L331.4 455.8 L331.9 455.8 L332.4 455.9 L332.9 455.9 L333.4 455.9 L333.9 455.9 L334.4 456.0 L334.9 456.0 L335.4 456.0 L335.9 456.0 L336.4 456.0 L336.9 456.0 L337.4 456.0 L337.9 455.9 L338.4 455.9 L338.9 455.8 L339.4 455.8 L339.9 455.7 L340.4 455.7 L340.9 455.6 L341.4 455.6 L341.9 455.6 L342.4 455.6 L342.9 455.6 L343.4 455.6 L343.9 455.6 L344.4 455.6 L344.9 455.6 L345.4 455.7 L345.9 455.7 L346.4 455.8 L346.9 455.8 L347.4 455.9 L347.9 455.9 L348.4 456.0 L348.9 456.0 L349.4 456.0 L349.9 456.0 L350.4 456.0 L350.9 455.9 L351.4 455.9 L351.9 455.9 L352.4 455.9 L352.9 455.9 L353.4 455.8 L353.9 455.8 L354.4 455.7 L354.9 455.7 L355.4 455.6 L355.9 455.6 L356.4 455.5 L356.9 455.5 L357.4 455.5 L357.9 455.5 L358.4 455.5 L358.9 455.5 L359.4 455.5 L359.9 455.4 L360.4 455.4 L360.9 455.4 L361.4 455.4 L361.9 455.4 L362.4 455.4 L362.9 455.4 L363.4 455.4 L363.9 455.5 L364.4 455.5 L364.9 455.5 L365.4 455.5 L365.9 455.6 L366.4 455.6 L366.9 455.7 L367.4 455.8 L367.9 455.8 L368.4 455.9 L368.9 456.0 L369.4 456.0 L369.9 456.0 L370.4 456.0 L370.9 456.0 L371.4 455.9 L371.9 455.9 L372.4 455.9 L372.9 455.9 L373.4 455.9 L373.9 455.8 L374.4 455.8 L374.9 455.7 L375.4 455.6 L375.9 455.6 L376.4 455.5 L376.9 455.5 L377.4 455.5 L377.9 455.6 L378.4 455.6 L378.9 455.7 L379.4 455.7 L379.9 455.8 L380.4 455.9 L380.9 455.9 L381.4 455.9 L381.9 456.0 L382.4 456.0 L382.9 456.0 L383.4 456.0 L383.9 456.0 L384.4 456.0 L384.9 456.0 L385.4 456.0 L385.9 456.0 L386.4 456.0 L386.9 455.9 L387.4 455.9 L387.9 455.9 L388.4 455.8 L388.9 455.8 L389.4 455.8 L389.9 455.8 L390.4 455.7 L390.9 455.7 L391.4 455.7 L391.9 455.7 L392.4 455.6 L392.9 455.6 L393.4 455.6 L393.9 455.6 L394.4 455.6 L394.9 455.7 L395.4 455.7 L395.9 455.7 L396.4 455.7 L396.9 455.7 L397.4 455.7 L397.9 455.7 L398.4 455.6 L398.9 455.6 L399.4 455.6 L399.9 455.5 L400.4 455.5 L400.9 455.4 L401.4 455.4 L401.9 455.4 L402.4 455.4 L402.9 455.4 L403.4 455.4 L403.9 455.4 L404.4 455.4 L404.9 455.4 L405.4 455.4 L405.9 455.5 L406.4 455.6 L406.9 455.7 L407.4 455.8 L407.9 455.8 L408.4 455.9 L408.9 456.0 L409.4 456.0 L409.9 456.0 L410.4 456.0 L410.9 455.9 L411.4 455.9 L411.9 455.9 L412.4 455.8 L412.9 455.8 L413.4 455.8 L413.9 455.8 L414.4 455.8 L414.9 455.8 L415.4 455.8 L415.9 455.7 L416.4 455.7 L416.9 455.7 L417.4 455.7 L417.9 455.8 L418.4 455.8 L418.9 455.9 L419.4 455.9 L419.9 455.9 L420.4 456.0 L420.9 456.0 L421.4 456.0 L421.9 455.9 L422.4 455.9 L422.9 455.8 L423.4 455.8 L423.9 455.7 L424.4 455.7 L424.9 455.7 L425.4 455.7 L425.9 455.7 L426.4 455.8 L426.9 455.8 L427.4 455.8 L427.9 455.9 L428.4 455.9 L428.9 456.0 L429.4 456.0 L429.9 456.0 L430.4 455.9 L430.9 455.9 L431.4 455.9 L431.9 455.9 L432.4 455.9 L432.9 455.9 L433.4 455.9 L433.9 455.8 L434.4 455.8 L434.9 455.7 L435.4 455.7 L435.9 455.6 L436.4 455.6 L436.9 455.5 L437.4 455.5 L437.9 455.5 L438.4 455.5 L438.9 455.5 L439.4 455.5 L439.9 455.5 L440.4 455.5 L440.9 455.5 L441.4 455.5 L441.9 455.5 L442.4 455.5 L442.9 455.5 L443.4 455.5 L443.9 455.5 L444.4 455.6 L444.9 455.6 L445.4 455.6 L445.9 455.5 L446.4 455.5 L446.9 455.5 L447.4 455.5 L447.9 455.5 L448.4 455.5 L448.9 455.5 L449.4 455.5 L449.9 455.6 L450.4 455.6 L450.9 455.6 L451.4 455.7 L451.9 455.7 L452.4 455.7 L452.9 455.8 L453.4 455.7 L453.9 455.7 L454.4 455.7 L454.9 455.7 L455.4 455.6 L455.9 455.6 L456.4 455.6 L456.9 455.5 L457.4 455.5 L457.9 455.6 L458.4 455.6 L458.9 455.6 L459.4 455.6 L459.9 455.6 L460.4 455.6 L460.9 455.6 L461.4 455.6 L461.9 455.6 L462.4 455.6 L462.9 455.5 L463.4 455.5 L463.9 455.5 L464.4 455.5 L464.9 455.4 L465.4 455.5 L465.9 455.6 L466.4 455.6 L466.9 455.7 L467.4 455.8 L467.9 455.8 L468.4 455.9 L468.9 456.0 L469.4 455.9 L469.9 455.9 L470.4 455.9 L470.9 455.8 L471.4 455.8 L471.9 455.7 L472.4 455.7 L472.9 455.6 L473.4 455.6 L473.9 455.5 L474.4 455.5 L474.9 455.4 L475.4 455.4 L475.9 455.4 L476.4 455.3 L476.9 455.3 L477.4 455.2 L477.9 454.2 L478.4 449.0 L478.9 443.9 L479.4 438.8 L479.9 439.8 L480.4 444.9 L480.9 450.1 L481.4 455.2 L481.9 455.2 L482.4 455.2 L482.9 455.2 L483.4 455.2 L483.9 455.2 L484.4 455.2 L484.9 455.2 L485.4 455.2 L485.9 455.2 L486.4 455.2 L486.9 455.2 L487.4 455.2 L487.9 455.2 L488.4 455.2 L488.9 455.2 L489.4 455.2 L489.9 455.2 L490.4 449.5 L490.9 443.9 L491.4 438.2 L491.9 437.1 L492.4 442.7 L492.9 448.4 L493.4 454.1 L493.9 455.2 L494.4 455.2 L494.9 455.2 L495.4 455.2 L495.9 455.2 L496.4 455.2 L496.9 455.2 L497.4 455.2 L497.9 455.2 L498.4 455.2 L498.9 455.2 L499.4 455.2 L499.9 455.2 L500.4 455.2 L500.9 455.2 L501.4 455.2 L501.9 455.2 L502.4 453.0 L502.9 447.4 L503.4 441.9 L503.9 436.3 L504.4 439.6 L504.9 445.2 L505.4 450.8 L505.9 455.2 L506.4 455.2 L506.9 455.2 L507.4 455.2 L507.9 455.2 L508.4 455.2 L508.9 455.2 L509.4 455.2 L509.9 455.2 L510.4 455.2 L510.9 455.2 L511.4 455.2 L511.9 455.2 L512.4 455.2 L512.9 455.2 L513.4 455.2 L513.9 455.2 L514.4 452.8 L514.9 446.8 L515.4 440.8 L515.9 434.8 L516.4 438.4 L516.9 444.4 L517.4 450.4 L517.9 455.2 L518.4 455.2 L518.9 455.2 L519.4 455.2 L519.9 455.2 L520.4 455.2 L520.9 455.2 L521.4 455.2 L521.9 455.2 L522.4 455.2 L522.9 455.2 L523.4 455.2 L523.9 455.2 L524.4 455.2 L524.9 455.2 L525.4 455.2 L525.9 455.2 L526.4 449.8 L526.9 444.3 L527.4 438.9 L527.9 437.8 L528.4 443.2 L528.9 448.7 L529.4 454.1 L529.9 455.1 L530.4 455.1 L530.9 455.0 L531.4 455.0 L531.9 455.0 L532.4 455.0 L532.9 455.0 L533.4 455.0 L533.9 455.0 L534.4 455.0 L534.9 455.1 L535.4 455.1 L535.9 455.1 L536.4 455.1 L536.9 455.2 L537.4 455.2 L537.9 455.2 L538.4 455.2 L538.9 455.3 L539.4 455.2 L539.9 455.2 L540.4 455.2 L540.9 455.1 L541.4 455.1 L541.9 455.0 L542.4 455.0 L542.9 455.0 L543.4 455.0 L543.9 455.0 L544.4 455.1 L544.9 455.1 L545.4 455.2 L545.9 455.2 L546.4 455.2 L546.9 455.3 L547.4 455.3 L547.9 455.2 L548.4 455.2 L548.9 455.2 L549.4 455.1 L549.9 455.1 L550.4 455.0 L550.9 455.0 L551.4 455.0 L551.9 455.0 L552.4 455.0 L552.9 455.0 L553.4 455.0 L553.9 455.0 L554.4 455.0 L554.9 455.0 L555.4 455.0 L555.9 455.0 L556.4 455.0 L556.9 455.0 L557.4 455.0 L557.9 455.0 L558.4 455.0 L558.9 455.0 L559.4 455.0 L559.9 454.9 L560.4 454.9 L560.9 454.8 L561.4 454.8 L561.9 454.8 L562.4 454.7 L562.9 454.7 L563.4 454.7 L563.9 454.7 L564.4 454.8 L564.9 454.8 L565.4 454.8 L565.9 454.9 L566.4 454.9 L566.9 455.0 L567.4 455.0 L567.9 455.0 L568.4 455.0 L568.9 455.0 L569.4 455.0 L569.9 455.0 L570.4 455.0 L570.9 455.0 L571.4 455.0 L571.9 455.0 L572.4 448.1 L572.9 439.5 L573.4 430.9 L573.9 425.7 L574.4 434.3 L574.9 442.9 L575.4 451.6 L575.9 454.8 L576.4 454.6 L576.9 454.3 L577.4 454.3 L577.9 454.2 L578.4 454.2 L578.9 454.2 L579.4 454.2 L579.9 454.2 L580.4 454.2 L580.9 454.2 L581.4 454.2 L581.9 454.3 L582.4 454.3 L582.9 454.4 L583.4 454.5 L583.9 454.6 L584.4 454.6 L584.9 454.7 L585.4 454.7 L585.9 454.6 L586.4 454.6 L586.9 454.5 L587.4 454.4 L587.9 454.4 L588.4 454.3 L588.9 454.3 L589.4 454.3 L589.9 454.3 L590.4 454.3 L590.9 454.4 L591.4 454.4 L591.9 454.4 L592.4 454.4 L592.9 454.5 L593.4 454.5 L593.9 454.5 L594.4 454.5 L594.9 454.6 L595.4 454.6 L595.9 454.6 L596.4 454.6 L596.9 454.7 L597.4 454.6 L597.9 454.6 L598.4 454.6 L598.9 454.6 L599.4 454.6 L599.9 454.6 L600.4 454.6 L600.9 454.5 L601.4 454.5 L601.9 454.5 L602.4 454.5 L602.9 454.5 L603.4 454.4 L603.9 454.4 L604.4 454.4 L604.9 454.4 L605.4 454.4 L605.9 454.4 L606.4 454.4 L606.9 454.4 L607.4 454.5 L607.9 454.5 L608.4 454.5 L608.9 454.5 L609.4 454.5 L609.9 454.5 L610.4 454.5 L610.9 454.5 L611.4 454.5 L611.9 454.5 L612.4 454.5 L612.9 454.5 L613.4 454.6 L613.9 454.6 L614.4 454.6 L614.9 454.6 L615.4 454.6 L615.9 454.7 L616.4 454.7 L616.9 454.7 L617.4 454.7 L617.9 454.6 L618.4 454.5 L618.9 454.5 L619.4 454.4 L619.9 454.4 L620.4 454.3 L620.9 454.2 L621.4 454.3 L621.9 454.3 L622.4 454.3 L622.9 454.4 L623.4 454.4 L623.9 454.5 L624.4 454.5 L624.9 454.5 L625.4 454.5 L625.9 454.5 L626.4 454.5 L626.9 454.4 L627.4 454.4 L627.9 454.4 L628.4 454.4 L628.9 454.3 L629.4 454.3 L629.9 454.3 L630.4 454.3 L630.9 454.3 L631.4 454.3 L631.9 454.3 L632.4 454.3 L632.9 454.3 L633.4 454.4 L633.9 454.4 L634.4 454.5 L634.9 454.5 L635.4 454.6 L635.9 454.6 L636.4 454.6 L636.9 454.7 L637.4 454.7 L637.9 454.6 L638.4 454.6 L638.9 454.6 L639.4 454.6 L639.9 454.6 L640.4 454.5 L640.9 454.5 L641.4 454.5 L641.9 454.5 L642.4 454.5 L642.9 454.5 L643.4 454.5 L643.9 454.5 L644.4 454.5 L644.9 454.5 L645.4 454.6 L645.9 454.6 L646.4 454.6 L646.9 454.6 L647.4 454.6 L647.9 454.6 L648.4 454.7 L648.9 454.7 L649.4 454.7 L649.9 454.7 L650.4 454.7 L650.9 454.7 L651.4 454.7 L651.9 454.8 L652.4 454.8 L652.9 454.8 L653.4 454.8 L653.9 454.7 L654.4 454.7 L654.9 454.6 L655.4 454.6 L655.9 454.6 L656.4 454.5 L656.9 454.5 L657.4 454.5 L657.9 454.5 L658.4 454.5 L658.9 454.5 L659.4 454.5 L659.9 454.5 L660.4 454.6 L660.9 454.6 L661.4 454.6 L661.9 454.6 L662.4 454.6 L662.9 454.5 L663.4 454.5 L663.9 454.5 L664.4 454.5 L664.9 454.5 L665.4 454.5 L665.9 454.5 L666.4 454.5 L666.9 454.5 L667.4 454.5 L667.9 454.5 L668.4 454.5 L668.9 454.5 L669.4 454.5 L669.9 454.5 L670.4 454.6 L670.9 454.6 L671.4 454.6 L671.9 454.6 L672.4 454.6 L672.9 454.6 L673.4 454.6 L673.9 454.6 L674.4 454.6 L674.9 454.6 L675.4 454.5 L675.9 454.5 L676.4 454.5 L676.9 454.5 L677.4 454.5 L677.9 454.5 L678.4 454.5 L678.9 454.5 L679.4 451.1 L679.9 442.7 L680.4 434.2 L680.9 429.2 L681.4 437.6 L681.9 446.1 L682.4 454.5 L682.9 454.5 L683.4 454.5 L683.9 454.5 L684.4 454.5 L684.9 451.1 L685.4 447.8 L685.9 444.4 L686.4 446.4 L686.9 449.8 L687.4 453.1 L687.9 454.5 L688.4 454.5 L688.9 451.1 L689.4 447.8 L689.9 444.4 L690.4 446.4 L690.9 449.8 L691.4 453.1 L691.9 454.5 L692.4 454.5 L692.9 451.1 L693.4 447.8 L693.9 444.4 L694.4 446.4 L694.9 449.8 L695.4 453.1 L695.9 454.5 L696.4 454.5 L696.9 451.1 L697.4 447.8 L697.9 444.4 L698.4 446.4 L698.9 449.8 L699.4 453.1 L699.9 454.5 L700.4 454.5 L700.9 451.1 L701.4 447.8 L701.9 444.4 L702.4 446.4 L702.9 449.8 L703.4 453.1 L703.9 454.5 L704.4 454.4 L704.9 454.3 L705.4 454.3 L705.9 454.3 L706.4 454.3 L706.9 454.3 L707.4 454.3 L707.9 454.3 L708.4 454.3 L708.9 454.3 L709.4 454.3 L709.9 454.3 L710.4 454.4 L710.9 454.4 L711.4 454.5 L711.9 454.5 L712.4 454.5 L712.9 454.6 L713.4 454.6 L713.9 454.5 L714.4 454.5 L714.9 454.5 L715.4 454.5 L715.9 454.5 L716.4 454.4 L716.9 454.4 L717.4 454.4 L717.9 454.4 L718.4 454.5 L718.9 454.5 L719.4 454.5 L719.9 454.5 L720.4 454.5 L720.9 454.5 L721.4 454.5 L721.9 454.5 L722.4 454.5 L722.9 454.5 L723.4 454.5 L723.9 454.6 L724.4 454.6 L724.9 454.6 L725.4 454.5 L725.9 454.5 L726.4 454.4 L726.9 454.4 L727.4 454.3 L727.9 454.3 L728.4 454.2 L728.9 454.2 L729.4 454.1 L729.9 454.1 L730.4 454.0 L730.9 453.8 L731.4 453.7 L731.9 453.5 L732.4 453.3 L732.9 453.2 L733.4 453.0 L733.9 452.9 L734.4 452.7 L734.9 452.6 L735.4 452.4 L735.9 452.2 L736.4 452.1 L736.9 451.9 L737.4 451.8 L737.9 451.6 L738.4 451.5 L738.9 451.3 L739.4 451.2 L739.9 451.0 L740.4 450.8 L740.9 450.7 L741.4 450.5 L741.9 450.4 L742.4 450.2 L742.9 450.1 L743.4 449.9 L743.9 449.7 L744.4 449.6 L744.9 449.4 L745.4 449.3 L745.9 449.1 L746.4 449.0 L746.9 448.8 L747.4 448.6 L747.9 448.5 L748.4 448.3 L748.9 448.2 L749.4 448.0 L749.9 447.9 L750.4 447.7 L750.9 447.5 L751.4 447.4 L751.9 447.2 L752.4 447.3 L752.9 447.5 L753.4 447.7 L753.9 447.8 L754.4 448.0 L754.9 448.2 L755.4 448.3 L755.9 448.5 L756.4 448.6 L756.9 448.8 L757.4 449.0 L757.9 449.1 L758.4 454.8 L758.9 454.9 L759.4 455.1 L759.9 455.3 L760.4 455.4 L760.9 455.4 L761.4 455.4 L761.9 455.5 L762.4 455.5 L762.9 455.5 L763.4 455.6 L763.9 455.6 L764.4 455.6 L764.9 455.6 L765.4 455.6 L765.9 455.6 L766.4 455.6 L766.9 455.6 L767.4 455.5 L767.9 455.5 L768.4 455.5 L768.9 455.4 L769.4 455.4 L769.9 455.3 L770.4 455.2 L770.9 455.2 L771.4 455.1 L771.9 455.1 L772.4 455.0 L772.9 455.0 L773.4 455.0 L773.9 455.0 L774.4 455.0 L774.9 455.0 L775.4 455.0 L775.9 455.0 L776.4 455.1 L776.9 455.1 L777.4 455.1 L777.9 455.1 L778.4 455.2 L778.9 455.2 L779.4 455.2 L779.9 455.3 L780.4 455.2 L780.9 455.2 L781.4 455.2 L781.9 455.1 L782.4 455.1 L782.9 455.1 L783.4 455.0 L783.9 455.0 L784.4 455.0 L784.9 455.0 L785.4 455.0 L785.9 455.1 L786.4 455.1 L786.9 455.1 L787.4 455.1 L787.9 455.1 L788.4 455.1 L788.9 455.1 L789.4 455.1 L789.9 455.1 L790.4 455.0 L790.9 455.0 L791.4 455.0 L791.9 455.0 L792.4 455.0 L792.9 455.1 L793.4 455.1 L793.9 455.2 L794.4 455.3 L794.9 455.3 L795.4 455.4 L795.9 455.4 L796.4 455.4 L796.9 455.4 L797.4 455.4 L797.9 455.5 L798.4 455.5 L798.9 455.5 L799.4 455.5 L799.9 455.5 L800.4 455.5 L800.9 455.5 L801.4 455.5 L801.9 455.5 L802.4 455.5 L802.9 455.6 L803.4 455.6 L803.9 455.6 L804.4 455.5 L804.9 455.5 L805.4 455.4 L805.9 455.3 L806.4 455.3 L806.9 455.2 L807.4 455.1 L807.9 455.1 L808.4 455.1 L808.9 455.1 L809.4 455.2 L809.9 455.2 L810.4 455.3 L810.9 455.3 L811.4 455.4 L811.9 455.4 L812.4 455.4 L812.9 455.4 L813.4 455.4 L813.9 455.4 L814.4 455.4 L814.9 455.4 L815.4 455.4 L815.9 455.4 L816.4 455.4 L816.9 455.4 L817.4 455.4 L817.9 455.4 L818.4 455.4 L818.9 455.4 L819.4 455.3 L819.9 455.3 L820.4 455.3 L820.9 455.3 L821.4 453.6 L821.9 445.1 L822.4 436.5 L822.9 428.0 L823.4 436.5 L823.9 445.1 L824.4 453.6 L824.9 455.2 L825.4 455.2 L825.9 455.1 L826.4 455.1 L826.9 455.2 L827.4 455.2 L827.9 455.3 L828.4 455.4 L828.9 455.4 L829.4 455.5 L829.9 455.6 L830.4 455.6 L830.9 455.6 L831.4 455.6 L831.9 455.6 L832.4 455.6 L832.9 455.6 L833.4 455.6 L833.9 455.6 L834.4 455.6 L834.9 455.5 L835.4 455.4 L835.9 455.4 L836.4 455.3 L836.9 455.2 L837.4 455.2 L837.9 455.1 L838.4 455.2 L838.9 455.2 L839.4 455.3 L839.9 455.3 L840.4 455.4 L840.9 455.5 L841.4 455.5 L841.9 455.6 L842.4 455.6 L842.9 455.5 L843.4 455.5 L843.9 455.4 L844.4 455.4 L844.9 455.3 L845.4 455.3 L845.9 455.2 L846.4 455.2 L846.9 455.2 L847.4 455.3 L847.9 455.3 L848.4 455.3 L848.9 455.3 L849.4 455.3 L849.9 455.3 L850.4 455.3 L850.9 455.2 L851.4 455.2 L851.9 455.2 L852.4 455.2 L852.9 455.1 L853.4 455.1 L853.9 455.1 L854.4 455.0 L854.9 455.0 L855.4 446.9 L855.9 436.7 L856.4 434.7 L856.9 434.7 L857.4 434.7 L857.9 434.7 L858.4 434.7 L858.9 434.7 L859.4 434.7 L859.9 434.7 L860.4 434.7 L860.9 434.7 L861.4 434.7 L861.9 434.7 L862.4 434.7 L862.9 434.7 L863.4 434.7 L863.9 434.7 L864.4 434.7 L864.9 434.7 L865.4 434.7 L865.9 434.7 L866.4 434.7 L866.9 434.7 L867.4 434.7 L867.9 434.7 L868.4 442.4 L868.9 452.1 L869.4 454.0 L869.9 454.0 L870.4 448.9 L870.9 442.6 L871.4 436.3 L871.9 440.1 L872.4 446.4 L872.9 452.7 L873.4 454.0 L873.9 454.0 L874.4 454.0 L874.9 454.0 L875.4 454.0 L875.9 454.0 L876.4 454.0 L876.9 454.0 L877.4 454.0 L877.9 449.2 L878.4 443.2 L878.9 437.2 L879.4 440.8 L879.9 446.8 L880.4 452.8 L880.9 454.3 L881.4 454.7 L881.9 455.0 L882.4 455.1 L882.9 455.1 L883.4 455.1 L883.9 455.0 L884.4 455.0 L884.9 455.0 L885.4 455.0 L885.9 455.0 L886.4 455.0 L886.9 454.9 L887.4 454.9 L887.9 454.8 L888.4 454.8 L888.9 454.7 L889.4 454.7 L889.9 454.6 L890.4 454.6 L890.9 454.6 L891.4 454.7 L891.9 454.7 L892.4 454.7 L892.9 454.7 L893.4 454.7 L893.9 454.8 L894.4 454.8 L894.9 454.8 L895.4 454.8 L895.9 454.8 L896.4 454.8 L896.9 454.8 L897.4 454.8 L897.9 454.8 L898.4 454.8 L898.9 454.8 L899.4 454.8 L899.9 454.8 L900.4 449.3 L900.9 440.2 L901.4 431.1 L901.9 429.2 L902.4 438.4 L902.9 447.5 L903.4 454.8 L903.9 454.7 L904.4 454.7 L904.9 454.6 L905.4 454.6 L905.9 454.5 L906.4 454.5 L906.9 454.4 L907.4 454.4 L907.9 454.3 L908.4 454.3 L908.9 454.2 L909.4 454.2 L909.9 454.1 L910.4 454.1 L910.9 454.0 L911.4 454.0 L911.9 454.0 L912.4 454.0 L912.9 452.3 L913.4 444.0 L913.9 435.6 L914.4 427.3 L914.9 435.6 L915.4 444.0 L915.9 452.3 L916.4 454.0 L916.9 454.0 L917.4 454.0 L917.9 454.0 L918.4 454.0 L918.9 454.0 L919.4 454.0 L919.9 454.0 L920.4 454.0 L920.9 454.0 L921.4 453.9 L921.9 453.9 L922.4 453.9 L922.9 453.9 L923.4 453.8 L923.9 453.8 L924.4 453.8 L924.9 453.8 L925.4 453.8 L925.9 453.7 L926.4 453.7 L926.9 453.7 L927.4 453.7 L927.9 453.6 L928.4 453.6 L928.9 453.6 L929.4 453.6 L929.9 453.6 L930.4 453.5 L930.9 453.5 L931.4 453.4 L931.9 453.3 L932.4 453.2 L932.9 453.0 L933.4 452.9 L933.9 452.8 L934.4 452.7 L934.9 452.6 L935.4 452.5 L935.9 452.3 L936.4 452.2 L936.9 452.1 L937.4 450.4 L937.9 442.1 L938.4 433.9 L938.9 428.9 L939.4 437.2 L939.9 445.4 L940.4 451.9 L940.9 451.6 L941.4 451.4 L941.9 451.1 L942.4 451.1 L942.9 451.3 L943.4 451.5 L943.9 451.6 L944.4 451.8 L944.9 452.0 L945.4 451.7 L945.9 451.2 L946.4 450.8 L946.9 450.3 L947.4 448.6 L947.9 441.9 L948.4 435.1 L948.9 431.1 L949.4 437.8 L949.9 444.6 L950.4 450.0 L950.9 449.9 L951.4 449.8 L951.9 449.7 L952.4 449.6 L952.9 449.5 L953.4 449.4 L953.9 449.3 L954.4 449.2 L954.9 449.1 L955.4 449.0 L955.9 444.9 L956.4 438.1 L956.9 431.4 L957.4 435.4 L957.9 442.2 L958.4 449.0 L958.9 448.6 L959.4 448.2 L959.9 444.1 L960.4 437.7 L960.9 431.3 L961.4 435.1 L961.9 441.6 L962.4 448.0 L962.9 447.8 L963.4 447.7 L963.9 447.5 L964.4 447.4 L964.9 447.2 L965.4 447.1 L965.9 443.4 L966.4 437.3 L966.9 431.2 L967.4 434.9 L967.9 440.9 L968.4 447.0 L968.9 447.0 L969.4 442.9 L969.9 436.1 L970.4 429.4 L970.9 433.4 L971.4 440.2 L971.9 447.0 L972.4 448.1 L972.9 449.3 L973.4 450.4 L973.9 451.5 L974.4 452.6 L974.9 453.8 L975.4 449.0 L975.9 444.7 L976.4 444.6 L976.9 444.5 L977.4 444.4 L977.9 444.3 L978.4 444.2 L978.9 444.1 L979.4 444.0 L979.9 443.9 L980.4 443.8 L980.9 443.7 L981.4 443.6 L981.9 443.6 L982.4 443.5 L982.9 443.4 L983.4 443.3 L983.9 443.2 L984.4 443.1 L984.9 443.0 L985.4 443.8 L985.9 444.6 L986.4 445.4 L986.9 446.2 L987.4 447.0 L987.9 447.8 L988.4 447.9 L988.9 447.9 L989.4 447.8 L989.9 447.7 L990.4 447.6 L990.9 447.5 L991.4 447.5 L991.9 447.4 L992.4 447.3 L992.9 447.2 L993.4 447.2 L993.9 447.1 L994.4 447.0 L994.9 446.9 L995.4 446.8 L995.9 446.8 L996.4 446.7 L996.9 446.6 L997.4 446.5 L997.9 446.4 L998.4 446.8 L998.9 447.8 L999.4 448.8 L999.9 449.8 L1000.4 450.8 L1000.9 451.8 L1001.4 452.8 L1001.9 453.0 L1002.4 453.0 L1002.9 453.0 L1003.4 453.0 L1003.9 453.0 L1004.4 453.0 L1004.9 453.0 L1005.4 453.0 L1005.9 453.0 L1006.4 453.0 L1006.9 453.0 L1007.4 453.0 L1007.9 453.0 L1008.4 453.0 L1008.9 453.0 L1009.4 453.0 L1009.9 452.9 L1010.4 452.3 L1010.9 451.7 L1011.4 451.0 L1011.9 450.4 L1012.4 449.8 L1012.9 449.2 L1013.4 448.6 L1013.9 448.0 L1014.4 447.4 L1014.9 446.8 L1015.4 446.2 L1015.9 445.6 L1016.4 445.0 L1016.9 444.3 L1017.4 443.7 L1017.9 443.1 L1018.4 443.6 L1018.9 444.3 L1019.4 445.0 L1019.9 445.7 L1020.4 446.4 L1020.9 447.1 L1021.4 447.9 L1021.9 448.0 L1022.4 448.0 L1022.9 448.0 L1023.4 448.0 L1023.9 448.0 L1024.4 448.0 L1024.9 448.0 L1025.4 448.0 L1025.9 448.0 L1026.4 448.0 L1026.9 448.0 L1027.4 448.0 L1027.9 448.0 L1028.4 448.0 L1028.9 448.0 L1029.4 448.0 L1029.9 448.0 L1030.4 448.0 L1030.9 448.0 L1031.4 448.0 L1031.9 447.0 L1032.4 445.9 L1032.9 444.9 L1033.4 445.2 L1033.9 445.8 L1034.4 446.4 L1034.9 447.0 L1035.4 447.6 L1035.9 448.2 L1036.4 448.9 L1036.9 449.5 L1037.4 450.1 L1037.9 450.7 L1038.4 451.3 L1038.9 451.9 L1039.4 452.5 L1039.9 452.9 L1040.4 452.5 L1040.9 452.2 L1041.4 451.8 L1041.9 451.4 L1042.4 451.0 L1042.9 450.7 L1043.4 450.3 L1043.9 449.9 L1044.4 449.5 L1044.9 449.1 L1045.4 448.8 L1045.9 448.4 L1046.4 448.0 L1046.9 448.4 L1047.4 448.8 L1047.9 449.1 L1048.4 449.5 L1048.9 449.9 L1049.4 450.3 L1049.9 450.7 L1050.4 451.0 L1050.9 451.4 L1051.4 451.8 L1051.9 452.2 L1052.4 448.4 L1052.9 441.4 L1053.4 440.0 L1053.9 440.0 L1054.4 440.0 L1054.9 440.0 L1055.4 440.0 L1055.9 440.0 L1056.4 440.0 L1056.9 440.0 L1057.4 440.0 L1057.9 440.0 L1058.4 440.0 L1058.9 440.0 L1059.4 440.0 L1059.9 440.0 L1060.4 439.6 L1060.9 439.1 L1061.4 438.6 L1061.9 438.1 L1062.4 437.6 L1062.9 437.1 L1063.4 436.6 L1063.9 436.1 L1064.4 435.6 L1064.9 435.1 L1065.4 434.6 L1065.9 434.1 L1066.4 434.5 L1066.9 435.1 L1067.4 435.7 L1067.9 436.3 L1068.4 436.9 L1068.9 437.5 L1069.4 438.1 L1069.9 438.7 L1070.4 439.3 L1070.9 439.9 L1071.4 440.1 L1071.9 440.2 L1072.4 440.3 L1072.9 440.4 L1073.4 440.5 L1073.9 440.6 L1074.4 440.7 L1074.9 440.8 L1075.4 440.9 L1075.9 441.0 L1076.4 440.4 L1076.9 439.6 L1077.4 438.8 L1077.9 438.0 L1078.4 437.2 L1078.9 436.4 L1079.4 435.6 L1079.9 434.9 L1080.4 434.7 L1080.9 434.7 L1081.4 434.7 L1081.9 434.7 L1082.4 434.7 L1082.9 434.7 L1083.4 434.7 L1083.9 434.7 L1084.4 434.7 L1084.9 434.7 L1085.4 434.7 L1085.9 434.7 L1086.4 434.7 L1086.9 434.7 L1087.4 434.7 L1087.9 434.7 L1088.4 434.7 L1088.9 434.7 L1089.4 434.7 L1089.9 434.7 L1090.4 442.4 L1090.9 451.0 L1091.4 453.9 L1091.9 453.9 L1092.4 453.9 L1092.9 453.9 L1093.4 453.9 L1093.9 453.9 L1094.4 453.9 L1094.9 453.9 L1095.4 453.9 L1095.9 453.9 L1096.4 453.9 L1096.9 453.9 L1097.4 453.9 L1097.9 453.9 L1098.4 453.9 L1098.9 453.9 L1099.4 453.9 L1099.9 453.9 L1100.4 453.9 L1100.9 453.9 L1101.4 453.9 L1101.9 453.9 L1102.4 453.9 L1102.9 453.9 L1103.4 453.9 L1103.9 453.9 L1104.4 453.9 L1104.9 453.9 L1105.4 453.9 L1105.9 453.9 L1106.4 453.9 L1106.9 453.9 L1107.4 453.9 L1107.9 453.9 L1108.4 452.5 L1108.9 450.7 L1109.4 448.9 L1109.9 447.1 L1110.4 445.3 L1110.9 443.5 L1111.4 441.8 L1111.9 440.0 L1112.4 438.2 L1112.9 436.4 L1113.4 439.1 L1113.9 441.7 L1114.4 444.4 L1114.9 447.0 L1115.4 449.7 L1115.9 452.3 L1116.4 453.9 L1116.9 453.8 L1117.4 453.7 L1117.9 453.7 L1118.4 453.6 L1118.9 453.5 L1119.4 453.5 L1119.9 453.4 L1120.4 453.3 L1120.9 453.3 L1121.4 453.2 L1121.9 453.1 L1122.4 453.0 L1122.9 453.0 L1123.4 446.8 L1123.9 437.8 L1124.4 428.8 L1124.9 434.2 L1125.4 443.2 L1125.9 452.2 L1126.4 452.5 L1126.9 452.4 L1127.4 452.4 L1127.9 452.3 L1128.4 452.2 L1128.9 452.2 L1129.4 452.1 L1129.9 452.0 L1130.4 451.6 L1130.9 451.1 L1131.4 450.6 L1131.9 450.1 L1132.4 441.4 L1132.9 432.4 L1133.4 430.6 L1133.9 439.6 L1134.4 448.5 L1134.9 449.1 L1135.4 449.8 L1135.9 450.4 L1136.4 451.0 L1136.9 451.6 L1137.4 452.3 L1137.9 452.9 L1138.4 452.4 L1138.9 451.6 L1139.4 450.9 L1139.9 450.1 L1140.4 449.4 L1140.9 448.6 L1141.4 447.9 L1141.9 447.1 L1142.4 447.8 L1142.9 448.8 L1143.4 449.8 L1143.9 450.8 L1144.4 451.8 L1144.9 452.8 L1145.4 452.9 L1145.9 452.9 L1146.4 452.8 L1146.9 452.7 L1147.4 452.7 L1147.9 452.6 L1148.4 452.5 L1148.9 452.4 L1149.4 452.4 L1149.9 452.3 L1150.4 452.2 L1150.9 452.2 L1151.4 452.1 L1151.9 452.0 L1152.4 450.4 L1152.9 448.4 L1153.4 445.6 L1153.9 439.7 L1154.4 436.1 L1154.9 440.4 L1155.4 441.7 L1155.9 443.9 L1156.4 446.1 L1156.9 448.2 L1157.4 450.4 L1157.9 452.6 L1158.4 452.9 L1158.9 452.8 L1159.4 452.8 L1159.9 452.7 L1160.4 451.5 L1160.9 448.3 L1161.4 445.1 L1161.9 441.9 L1162.4 438.7 L1162.9 435.5 L1163.4 434.9 L1163.9 434.9 L1164.4 434.9 L1164.9 434.9 L1165.4 434.9 L1165.9 434.9 L1166.4 434.9 L1166.9 434.9 L1167.4 440.0 L1167.9 446.4 L1168.4 450.8 L1168.9 452.6 L1169.4 453.0 L1169.9 453.0 L1170.4 452.9 L1170.9 452.9 L1171.4 452.9 L1171.9 452.9 L1172.4 452.9 L1172.9 452.8 L1173.4 452.8 L1173.9 452.8 L1174.4 452.8 L1174.9 452.8 L1175.4 452.7 L1175.9 452.7 L1176.4 452.7 L1176.9 452.7 L1177.4 452.6 L1177.9 452.6 L1178.4 452.6 L1178.9 452.6 L1179.4 452.6 L1179.9 452.5 L1180.4 452.5 L1180.9 452.5 L1181.4 452.5 L1181.9 452.5 L1182.4 452.4 L1182.9 452.4 L1183.4 452.4 L1183.9 452.4 L1184.4 452.4 L1184.9 452.3 L1185.4 452.3 L1185.9 452.3 L1186.4 452.3 L1186.9 452.3 L1187.4 452.2 L1187.9 452.2 L1188.4 452.2 L1188.9 452.2 L1189.4 452.1 L1189.9 452.1 L1190.4 452.1 L1190.9 452.1 L1191.4 452.1 L1191.9 452.0 L1192.4 452.0 L1192.9 452.0 L1193.4 450.2 L1193.9 447.9 L1194.4 445.7 L1194.9 443.4 L1195.4 445.2 L1195.9 448.0 L1196.4 450.7 L1196.9 453.4 L1197.4 451.8 L1197.9 449.0 L1198.4 446.3 L1198.9 443.5 L1199.4 445.0 L1199.9 447.5 L1200.4 450.0 L1200.9 452.5 L1201.4 450.8 L1201.9 448.0 L1202.4 445.3 L1202.9 442.5 L1203.4 444.0 L1203.9 446.5 L1204.4 449.0 L1204.9 451.5 L1205.4 450.4 L1205.9 448.4 L1206.4 446.4 L1206.9 444.4 L1207.4 445.8 L1207.9 448.1 L1208.4 450.3 L1208.9 452.6 L1209.4 451.0 L1209.9 448.5 L1210.4 446.0 L1210.9 443.5 L1211.4 444.8 L1211.9 447.1 L1212.4 449.3 L1212.9 451.6 L1213.4 450.4 L1213.9 448.4 L1214.4 446.4 L1214.9 444.4 L1215.4 445.8 L1215.9 448.1 L1216.4 450.3 L1216.9 452.6 L1217.4 447.2 L1217.9 439.9 L1218.4 432.7 L1218.9 425.4 L1219.4 427.5 L1219.9 431.8 L1220.4 436.1 L1220.9 437.0 L1221.4 436.9 L1221.9 436.9 L1222.4 436.8 L1222.9 436.8 L1223.4 436.7 L1223.9 436.7 L1224.4 436.7 L1224.9 436.6 L1225.4 439.1 L1225.9 442.2 L1226.4 445.3 L1226.9 448.4 L1227.4 448.9 L1227.9 448.8 L1228.4 448.7 L1228.9 448.6 L1229.4 448.5 L1229.9 448.4 L1230.4 448.3 L1230.9 448.2 L1231.4 448.1 L1231.9 448.0 L1232.4 448.0 L1232.9 448.0 L1233.4 448.0 L1233.9 448.0 L1234.4 448.0 L1234.9 448.0 L1235.4 448.0 L1235.9 448.0 L1236.4 448.0 L1236.9 448.0 L1237.4 448.0 L1237.9 448.0 L1238.4 448.0 L1238.9 448.0 L1239.4 448.0 L1239.9 448.0 L1240.4 448.0 L1240.9 448.0 L1241.4 448.0 L1241.9 448.0 L1242.4 448.0 L1242.9 448.0 L1243.4 448.0 L1243.9 448.0 L1244.4 449.2 L1244.9 450.7 L1245.4 452.2 L1245.9 453.7 L1246.4 454.0 L1246.9 454.0 L1247.4 454.0 L1247.9 454.0 L1248.4 454.0 L1248.9 454.0 L1249.4 454.0 L1249.9 454.0 L1250.4 454.0 L1250.9 454.0 L1251.4 454.0 L1251.9 454.0 L1252.4 454.0 L1252.9 454.0 L1253.4 454.0 L1253.9 454.0 L1254.4 454.0 L1254.9 454.0 L1255.4 454.0 L1255.9 454.0 L1256.4 454.0 L1256.9 454.0 L1257.4 454.0 L1257.9 454.0 L1258.4 454.0 L1258.9 454.0 L1259.4 454.0 L1259.9 454.0 L1260.4 454.0 L1260.9 454.0 L1261.4 454.0 L1261.9 454.0 L1262.4 454.0 L1262.9 454.0 L1263.4 454.0 L1263.9 454.0 L1264.4 454.0 L1264.9 454.0 L1265.4 454.0 L1265.9 454.0 L1266.4 454.0 L1266.9 454.0 L1267.4 454.0 L1267.9 454.0 L1268.4 454.0 L1268.9 454.0 L1269.4 454.0 L1269.9 454.0 L1270.4 454.0 L1270.9 454.0 L1271.4 454.0 L1271.9 454.0 L1272.4 454.0 L1272.9 454.0 L1273.4 454.0 L1273.9 454.0 L1274.4 454.0 L1274.9 454.0 L1275.4 454.0 L1275.9 454.0 L1276.4 454.0 L1276.9 454.0 L1277.4 454.0 L1277.9 454.0 L1278.4 453.0 L1278.9 451.8 L1279.4 451.6 L1279.9 451.6 L1280.4 451.6 L1280.9 451.6 L1281.4 451.6 L1281.9 451.6 L1282.4 451.6 L1282.9 451.6 L1283.4 451.6 L1283.9 451.6 L1284.4 451.6 L1284.9 451.6 L1285.4 452.6 L1285.9 453.8 L1286.4 454.0 L1286.9 454.0 L1287.4 454.0 L1287.9 454.0 L1288.4 454.0 L1288.9 454.0 L1289.4 454.0 L1289.9 454.0 L1290.4 451.7 L1290.9 450.5 L1291.4 450.5 L1291.9 450.5 L1292.4 450.5 L1292.9 450.5 L1293.4 450.5 L1293.9 450.5 L1294.4 450.5 L1294.9 450.5 L1295.4 450.5 L1295.9 450.5 L1296.4 451.9 L1296.9 453.7 L1297.4 453.6 L1297.9 453.1 L1298.4 452.6 L1298.9 452.1 L1299.4 452.4 L1299.9 452.9 L1300.4 453.4 L1300.9 453.9 L1301.4 454.0 L1301.9 454.0 L1302.4 454.0 L1302.9 454.0 L1303.4 454.1 L1303.9 454.1 L1304.4 454.1 L1304.9 454.1 L1305.4 454.1 L1305.9 454.1 L1306.4 454.1 L1306.9 454.0 L1307.4 454.0 L1307.9 454.0 L1308.4 454.0 L1308.9 454.0 L1309.4 454.0 L1309.9 454.0 L1310.4 454.0 L1310.9 454.0 L1311.4 454.0 L1311.9 454.0 L1312.4 454.1 L1312.9 454.1 L1313.4 454.1 L1313.9 454.1 L1314.4 454.2 L1314.9 454.2 L1315.4 454.2 L1315.9 454.3 L1316.4 454.3 L1316.9 454.3 L1317.4 454.3 L1317.9 454.2 L1318.4 454.2 L1318.9 454.1 L1319.4 454.1 L1319.9 454.0 L1320.4 453.9 L1320.9 453.9 L1321.4 453.9 L1321.9 453.9 L1322.4 454.0 L1322.9 454.0 L1323.4 454.1 L1323.9 454.1 L1324.4 454.2 L1324.9 454.2 L1325.4 454.2 L1325.9 454.2 L1326.4 454.2 L1326.9 454.2 L1327.4 454.2 L1327.9 454.2 L1328.4 454.2 L1328.9 454.2 L1329.4 454.1 L1329.9 454.1 L1330.4 454.1 L1330.9 454.0 L1331.4 454.0 L1331.9 453.9 L1332.4 453.9 L1332.9 453.9 L1333.4 453.9 L1333.9 453.9 L1334.4 453.9 L1334.9 454.0 L1335.4 454.0 L1335.9 454.0 L1336.4 454.0 L1336.9 454.1 L1337.4 454.1 L1337.9 454.1 L1338.4 454.2 L1338.9 454.2 L1339.4 454.2 L1339.9 454.2 L1340.4 454.3 L1340.9 454.3 L1341.4 454.3 L1341.9 454.3 L1342.4 454.3 L1342.9 454.2 L1343.4 454.2 L1343.9 454.2 L1344.4 454.2 L1344.9 454.2 L1345.4 454.2 L1345.9 454.1 L1346.4 454.1 L1346.9 454.1 L1347.4 454.0 L1347.9 454.0 L1348.4 453.9 L1348.9 453.9 L1349.4 454.0 L1349.9 454.0 L1350.4 454.1 L1350.9 454.2 L1351.4 454.3 L1351.9 454.4 L1352.4 454.4 L1352.9 454.5 L1353.4 454.5 L1353.9 454.5 L1354.4 454.5 L1354.9 454.5 L1355.4 454.5 L1355.9 454.4 L1356.4 454.4 L1356.9 454.4 L1357.4 454.4 L1357.9 454.4 L1358.4 454.4 L1358.9 454.5 L1359.4 454.5 L1359.9 454.5 L1360.4 454.5 L1360.9 454.5 L1361.4 454.4 L1361.9 454.3 L1362.4 454.2 L1362.9 448.6 L1363.4 441.5 L1363.9 434.4 L1364.4 433.0 L1364.9 440.1 L1365.4 447.1 L1365.9 454.2 L1366.4 454.2 L1366.9 454.2 L1367.4 454.2 L1367.9 454.2 L1368.4 454.2 L1368.9 454.2 L1369.4 454.2 L1369.9 454.2 L1370.4 454.2 L1370.9 454.2 L1371.4 454.2 L1371.9 454.2 L1372.4 454.2 L1372.9 454.2 L1373.4 454.2 L1373.9 454.2 L1374.4 454.2 L1374.9 454.2 L1375.4 454.2 L1375.9 447.9 L1376.4 440.0 L1376.9 432.0 L1377.4 430.5 L1377.9 438.4 L1378.4 446.3 L1378.9 454.2 L1379.4 454.2 L1379.9 454.2 L1380.4 454.2 L1380.9 454.2 L1381.4 454.2 L1381.9 454.2 L1382.4 454.2 L1382.9 454.2 L1383.4 454.2 L1383.9 454.2 L1384.4 454.2 L1384.9 454.2 L1385.4 454.2 L1385.9 454.2 L1386.4 454.2 L1386.9 454.2 L1387.4 454.2 L1387.9 454.2 L1388.4 454.2 L1388.9 454.2 L1389.4 454.2 L1389.9 449.5 L1390.4 441.7 L1390.9 433.9 L1391.4 429.3 L1391.9 437.1 L1392.4 444.8 L1392.9 452.6 L1393.4 454.2 L1393.9 454.2 L1394.4 454.2 L1394.9 454.2 L1395.4 454.2 L1395.9 454.2 L1396.4 454.2 L1396.9 454.2 L1397.4 451.0 L1397.9 447.8 L1398.4 444.7 L1398.9 445.3 L1399.4 448.5 L1399.9 451.7 L1400.4 454.2 L1400.9 454.2 L1401.4 454.2 L1401.9 454.2 L1402.4 454.2 L1402.9 454.2 L1403.4 454.2 L1403.9 454.2 L1404.4 454.2 L1404.9 454.2 L1405.4 454.2 L1405.9 454.2 L1406.4 454.2 L1406.9 454.2 L1407.4 454.2 L1407.9 454.2 L1408.4 454.2 L1408.9 454.2 L1409.4 454.2 L1409.9 454.2 L1410.4 454.2 L1410.9 454.2 L1411.4 454.2 L1411.9 454.2 L1412.4 454.2 L1412.9 449.1 L1413.4 440.6 L1413.9 432.1 L1414.4 427.0 L1414.9 435.5 L1415.4 444.0 L1415.9 452.5 L1416.4 454.2 L1416.9 454.2 L1417.4 454.2 L1417.9 454.2 L1418.4 449.5 L1418.9 441.5 L1419.4 433.6 L1419.9 428.9 L1420.4 436.8 L1420.9 444.7 L1421.4 452.6 L1421.9 454.2 L1422.4 454.2 L1422.9 454.2 L1423.4 452.6 L1423.9 450.7 L1424.4 450.3 L1424.9 450.3 L1425.4 450.3 L1425.9 450.3 L1426.4 450.3 L1426.9 450.3 L1427.4 450.3 L1427.9 450.3 L1428.4 450.3 L1428.9 450.3 L1429.4 450.3 L1429.9 450.3 L1430.4 450.3 L1430.9 450.3 L1431.4 450.3 L1431.9 450.3 L1432.4 450.3 L1432.9 450.3 L1433.4 450.3 L1433.9 450.3 L1434.4 450.3 L1434.9 450.3 L1435.4 451.1 L1435.9 452.1 L1436.4 453.0 L1436.9 454.0 L1437.4 454.2 L1437.9 454.2 L1438.4 454.2 L1438.9 454.2 L1439.4 454.2 L1439.9 454.2 L1440.4 454.2 L1440.9 454.2 L1441.4 454.2 L1441.9 454.2 L1442.4 454.2 L1442.9 454.2 L1443.4 454.2 L1443.9 454.2 L1444.4 452.2 L1444.9 450.3 L1445.4 450.3 L1445.9 450.3 L1446.4 450.3 L1446.9 450.3 L1447.4 450.3 L1447.9 450.3 L1448.4 450.3 L1448.9 450.3 L1449.4 450.3 L1449.9 450.3 L1450.4 450.3 L1450.9 450.3 L1451.4 450.3 L1451.9 450.3 L1452.4 450.3 L1452.9 450.3 L1453.4 450.3 L1453.9 450.3 L1454.4 450.3 L1454.9 450.3 L1455.4 450.3 L1455.9 450.3 L1456.4 450.3 L1456.9 450.3 L1457.4 450.3 L1457.9 450.3 L1458.4 450.3 L1458.9 450.3 L1459.4 450.3 L1459.9 450.3 L1460.4 450.3 L1460.9 450.3 L1461.4 450.3 L1461.9 450.3 L1462.4 450.3 L1462.9 450.3 L1463.4 450.3 L1463.9 451.5 L1464.4 452.7 L1464.9 454.0 L1465.4 454.2 L1465.9 454.2 L1466.4 454.2 L1466.9 454.2 L1467.4 451.0 L1467.9 442.9 L1468.4 434.8 L1468.9 426.7 L1469.4 434.8 L1469.9 442.9 L1470.4 451.0 L1470.9 454.2 L1471.4 454.2 L1471.9 454.1 L1472.4 454.1 L1472.9 454.1 L1473.4 454.2 L1473.9 454.2 L1474.4 454.2 L1474.9 454.2 L1475.4 454.2 L1475.9 454.2 L1476.4 454.2 L1476.9 454.2 L1477.4 454.2 L1477.9 454.2 L1478.4 454.1 L1478.9 454.1 L1479.4 454.1 L1479.9 454.1 L1480.4 454.1 L1480.9 454.2 L1481.4 454.3 L1481.9 454.3 L1482.4 454.4 L1482.9 454.5 L1483.4 454.5 L1483.9 454.6 L1484.4 454.6 L1484.9 454.5 L1485.4 454.5 L1485.9 454.4 L1486.4 454.4 L1486.9 454.3 L1487.4 454.3 L1487.9 454.2 L1488.4 454.2 L1488.9 454.2 L1489.4 454.2 L1489.9 454.2 L1490.4 454.2 L1490.9 454.2 L1491.4 454.2 L1491.9 454.1 L1492.4 454.2 L1492.9 454.2 L1493.4 454.2 L1493.9 454.2 L1494.4 454.3 L1494.9 454.3 L1495.4 454.3 L1495.9 454.3 L1496.4 454.4 L1496.9 454.4 L1497.4 454.5 L1497.9 454.5 L1498.4 454.6 L1498.9 454.6 L1499.4 454.6 L1499.9 454.7 L1500.4 454.7 L1500.9 454.7 L1501.4 454.7 L1501.9 454.7 L1502.4 454.6 L1502.9 454.6 L1503.4 454.6 L1503.9 454.6 L1504.4 454.6 L1504.9 454.5 L1505.4 454.5 L1505.9 454.4 L1506.4 454.4 L1506.9 454.3 L1507.4 454.3 L1507.9 454.2 L1508.4 454.2 L1508.9 454.2 L1509.4 454.2 L1509.9 454.2 L1510.4 454.2 L1510.9 454.2 L1511.4 454.2 L1511.9 454.2 L1512.4 454.2 L1512.9 454.3 L1513.4 454.3 L1513.9 454.4 L1514.4 454.5 L1514.9 454.5 L1515.4 454.6 L1515.9 454.7 L1516.4 454.7 L1516.9 454.6 L1517.4 454.6 L1517.9 454.6 L1518.4 454.5 L1518.9 454.5 L1519.4 454.5 L1519.9 454.5 L1520.4 454.5 L1520.9 454.5 L1521.4 454.5 L1521.9 454.5 L1522.4 454.5 L1522.9 454.5 L1523.4 454.5 L1523.9 454.5 L1524.4 454.5 L1524.9 454.4 L1525.4 454.4 L1525.9 454.3 L1526.4 454.3 L1526.9 454.2 L1527.4 454.2 L1527.9 454.1 L1528.4 454.1 L1528.9 454.1 L1529.4 454.1 L1529.9 454.1 L1530.4 454.1 L1530.9 454.1 L1531.4 454.1 L1531.9 454.1 L1532.4 454.1 L1532.9 454.2 L1533.4 454.2 L1533.9 454.3 L1534.4 454.4 L1534.9 454.4 L1535.4 454.5 L1535.9 454.5 L1536.4 454.5 L1536.9 454.5 L1537.4 454.5 L1537.9 454.4 L1538.4 454.4 L1538.9 454.4 L1539.4 454.4 L1539.9 454.4 L1540.4 454.3 L1540.9 454.3 L1541.4 454.3 L1541.9 454.2 L1542.4 454.2 L1542.9 454.2 L1543.4 454.1 L1543.9 454.1 L1544.4 454.2 L1544.9 454.2 L1545.4 454.3 L1545.9 454.4 L1546.4 454.5 L1546.9 454.5 L1547.4 454.6 L1547.9 454.7 L1548.4 454.7 L1548.9 454.7 L1549.4 454.6 L1549.9 454.6 L1550.4 454.6 L1550.9 454.6 L1551.4 454.5 L1551.9 454.5 L1552.4 454.5 L1552.9 454.5 L1553.4 454.5 L1553.9 454.5 L1554.4 454.6 L1554.9 454.6 L1555.4 454.6 L1555.9 454.6 L1556.4 454.6 L1556.9 454.5 L1557.4 454.4 L1557.9 454.4 L1558.4 454.3 L1558.9 454.2 L1559.4 454.2 L1559.9 454.1 L1560.4 454.2 L1560.9 454.2 L1561.4 454.3 L1561.9 454.4 L1562.4 454.4 L1562.9 454.5 L1563.4 454.6 L1563.9 454.6 L1564.4 454.6 L1564.9 454.5 L1565.4 454.5 L1565.9 454.4 L1566.4 454.3 L1566.9 454.2 L1567.4 454.2 L1567.9 454.1 L1568.4 454.2 L1568.9 454.2 L1569.4 454.3 L1569.9 454.4 L1570.4 454.4 L1570.9 454.5 L1571.4 454.6 L1571.9 454.6 L1572.4 454.6 L1572.9 454.6 L1573.4 454.6 L1573.9 454.5 L1574.4 454.5 L1574.9 454.4 L1575.4 454.4 L1575.9 454.4 L1576.4 454.4 L1576.9 454.3 L1577.4 454.3 L1577.9 454.3 L1578.4 454.3 L1578.9 454.3 L1579.4 454.3 L1579.9 454.3 L1580.4 454.3 L1580.9 454.3 L1581.4 454.3 L1581.9 454.4 L1582.4 454.4 L1582.9 454.4 L1583.4 454.4 L1583.9 454.4 L1584.4 454.5 L1584.9 454.5 L1585.4 454.5 L1585.9 454.6 L1586.4 454.6 L1586.9 454.6 L1587.4 454.7 L1587.9 454.7 L1588.4 454.7 L1588.9 454.6 L1589.4 454.5 L1589.9 454.5 L1590.4 454.4 L1590.9 454.4 L1591.4 454.3 L1591.9 454.2 L1592.4 454.2 L1592.9 454.2 L1593.4 454.2 L1593.9 454.2 L1594.4 454.2 L1594.9 454.2 L1595.4 454.2 L1595.9 454.1 L1596.4 454.2 L1596.9 454.2 L1597.4 454.2 L1597.9 454.3 L1598.4 454.3 L1598.9 454.3 L1599.4 454.4 L1599.9 454.4 L1600.4 454.4 L1600.9 454.4 L1601.4 454.3 L1601.9 454.3 L1602.4 454.3 L1602.9 454.3 L1603.4 454.2 L1603.9 454.2 L1604.4 454.2 L1604.9 454.2 L1605.4 454.2 L1605.9 454.2 L1606.4 454.2 L1606.9 454.2 L1607.4 454.1 L1607.9 454.1 L1608.4 454.1 L1608.9 454.1 L1609.4 454.1 L1609.9 454.1 L1610.4 454.1 L1610.9 454.2 L1611.4 454.2 L1611.9 454.2 L1612.4 454.2 L1612.9 454.1 L1613.4 454.1 L1613.9 454.1 L1614.4 454.1 L1614.9 454.1 L1615.4 454.1 L1615.9 454.1 L1616.4 454.1 L1616.9 454.1 L1617.4 454.1 L1617.9 454.1 L1618.4 454.1 L1618.9 454.2 L1619.4 454.2 L1619.9 454.2 L1620.4 454.2 L1620.9 454.2 L1621.4 454.2 L1621.9 454.2 L1622.4 454.2 L1622.9 454.2 L1623.4 454.3 L1623.9 454.3 L1624.4 454.3 L1624.9 454.3 L1625.4 454.3 L1625.9 454.3 L1626.4 454.3 L1626.9 454.3 L1627.4 454.3 L1627.9 454.3 L1628.4 454.3 L1628.9 454.3 L1629.4 454.4 L1629.9 454.4 L1630.4 454.5 L1630.9 454.5 L1631.4 454.5 L1631.9 454.6 L1632.4 454.5 L1632.9 454.5 L1633.4 454.5 L1633.9 454.4 L1634.4 454.4 L1634.9 454.3 L1635.4 454.3 L1635.9 454.3 L1636.4 454.3 L1636.9 454.3 L1637.4 454.3 L1637.9 454.3 L1638.4 454.3 L1638.9 454.4 L1639.4 454.4 L1639.9 454.4 L1640.4 454.4 L1640.9 454.3 L1641.4 454.3 L1641.9 454.3 L1642.4 454.3 L1642.9 454.2 L1643.4 454.2 L1643.9 454.2 L1644.4 454.2 L1644.9 454.2 L1645.4 454.2 L1645.9 454.2 L1646.4 454.2 L1646.9 454.3 L1647.4 454.3 L1647.9 454.3 L1648.4 454.3 L1648.9 454.3 L1649.4 454.2 L1649.9 454.2 L1649.9 458.4 L75.4 458.4 Z" fill="#3c2b1f"/>
<path d="M738.0 413.7 L742.0 410.2 L757.0 403.3 L758.5 403.3 L759.0 449.5 L755.0 448.2 L750.0 447.8 L745.0 449.4 L740.0 451.0 L738.0 451.6 Z" fill="#58572e"/>
<path d="M731.5 432.7 L737.0 413.7 L738.0 413.7 L738.0 451.6 L731.0 453.8 Z" fill="#48465a"/>
<path d="M75.0 278.5H1650.3" stroke="#ffffff" stroke-opacity="0.07" stroke-width="1"/>
<path d="M75.0 323.5H1650.3" stroke="#ffffff" stroke-opacity="0.07" stroke-width="1"/>
<path d="M75.0 368.5H1650.3" stroke="#ffffff" stroke-opacity="0.07" stroke-width="1"/>
<path d="M75.0 413.5H1650.3" stroke="#ffffff" stroke-opacity="0.07" stroke-width="1"/>
<path d="M75.0 458.5H1650.3" stroke="#ffffff" stroke-opacity="0.07" stroke-width="1"/>
<path d="M75.0 503.5H1650.3" stroke="#ffffff" stroke-opacity="0.07" stroke-width="1"/>
<path d="M75.5 278.0V504.0" stroke="#ffffff" stroke-opacity="0.07" stroke-width="1"/>
<path d="M140.5 278.0V504.0" stroke="#ffffff" stroke-opacity="0.07" stroke-width="1"/>
<path d="M206.5 278.0V504.0" stroke="#ffffff" stroke-opacity="0.07" stroke-width="1"/>
<path d="M272.5 278.0V504.0" stroke="#ffffff" stroke-opacity="0.07" stroke-width="1"/>
<path d="M337.5 278.0V504.0" stroke="#ffffff" stroke-opacity="0.07" stroke-width="1"/>
<path d="M403.5 278.0V504.0" stroke="#ffffff" stroke-opacity="0.07" stroke-width="1"/>
<path d="M468.5 278.0V504.0" stroke="#ffffff" stroke-opacity="0.07" stroke-width="1"/>
<path d="M534.5 278.0V504.0" stroke="#ffffff" stroke-opacity="0.07" stroke-width="1"/>
<path d="M600.5 278.0V504.0" stroke="#ffffff" stroke-opacity="0.07" stroke-width="1"/>
<path d="M665.5 278.0V504.0" stroke="#ffffff" stroke-opacity="0.07" stroke-width="1"/>
<path d="M731.5 278.0V504.0" stroke="#ffffff" stroke-opacity="0.07" stroke-width="1"/>
<path d="M796.5 278.0V504.0" stroke="#ffffff" stroke-opacity="0.07" stroke-width="1"/>
<path d="M862.5 278.0V504.0" stroke="#ffffff" stroke-opacity="0.07" stroke-width="1"/>
<path d="M928.5 278.0V504.0" stroke="#ffffff" stroke-opacity="0.07" stroke-width="1"/>
<path d="M993.5 278.0V504.0" stroke="#ffffff" stroke-opacity="0.07" stroke-width="1"/>
<path d="M1059.5 278.0V504.0" stroke="#ffffff" stroke-opacity="0.07" stroke-width="1"/>
<path d="M1124.5 278.0V504.0" stroke="#ffffff" stroke-opacity="0.07" stroke-width="1"/>
<path d="M1190.5 278.0V504.0" stroke="#ffffff" stroke-opacity="0.07" stroke-width="1"/>
<path d="M1256.5 278.0V504.0" stroke="#ffffff" stroke-opacity="0.07" stroke-width="1"/>
<path d="M1321.5 278.0V504.0" stroke="#ffffff" stroke-opacity="0.07" stroke-width="1"/>
<path d="M1387.5 278.0V504.0" stroke="#ffffff" stroke-opacity="0.07" stroke-width="1"/>
<path d="M1452.5 278.0V504.0" stroke="#ffffff" stroke-opacity="0.07" stroke-width="1"/>
<path d="M1518.5 278.0V504.0" stroke="#ffffff" stroke-opacity="0.07" stroke-width="1"/>
<path d="M1584.5 278.0V504.0" stroke="#ffffff" stroke-opacity="0.07" stroke-width="1"/>
<path d="M968.0 390.0 L969.0 429.0 L971.6 362.0 L973.2 361.3 L975.0 427.8 L979.0 406.0 L982.9 352.0 L986.5 411.0 L988.2 414.5 L989.5 386.0 L990.7 412.8 L993.7 352.0 L997.4 431.0 L1000.2 366.0 L1002.3 383.0 L1004.8 367.0 L1006.8 428.6 L1009.8 367.0 L1016.5 371.0 L1019.8 433.6 L1021.0 372.0 L1033.0 377.0 L1034.8 393.0 L1036.4 437.0 L1046.4 437.2 L1056.4 438.0 L1063.0 441.3 L1073.0 438.0 L1082.0 432.2 L1086.3 439.6 L1094.6 441.3 L1100.4 418.9 L1103.8 438.0 L1108.7 436.3 L1111.6 403.9 L1114.6 434.6 L1122.9 449.6 L1130.0 447.5 L1134.6 448.6 L1142.7 444.0 L1145.6 439.4 L1146.8 414.0 L1147.9 434.6 L1149.0 412.2 L1150.8 420.9 L1152.5 444.0 L1155.4 446.9 L1160.0 444.6 L1164.7 446.3 L1170.4 442.8 L1172.8 424.3 L1175.3 420.9 L1177.4 433.6 L1179.7 444.0 L1183.7 423.2 L1186.0 427.2 L1187.8 423.8 L1190.0 425.6 L1191.8 444.0 L1199.3 444.6 L1200.5 428.4 L1217.8 432.4 L1219.5 435.9 L1222.4 434.2 L1234.0 439.4 L1244.4 442.3 L1246.1 446.3 L1250.2 448.6 L1259.4 454.8 L1266.3 452.6 L1271.0 455.9 L1285.0 458.2" stroke="#58a84d" stroke-width="1.3" fill="none" stroke-linejoin="round"/>
<path d="M75.4 455.6 L79.4 455.5 L83.4 455.9 L87.4 455.5 L91.4 455.4 L95.4 456.0 L99.4 455.7 L103.4 455.5 L107.4 455.7 L111.4 455.4 L115.4 455.7 L119.4 456.0 L123.4 456.0 L127.4 455.8 L131.4 455.5 L135.4 455.6 L139.4 455.5 L143.4 455.9 L147.4 455.7 L151.4 455.9 L155.4 455.6 L159.4 455.5 L163.4 455.9 L167.4 456.0 L171.4 455.9 L175.4 455.9 L179.4 455.9 L183.4 455.9 L187.4 455.5 L191.4 455.7 L195.4 455.6 L199.4 455.4 L203.4 455.4 L207.4 455.5 L211.4 455.5 L215.4 455.8 L219.4 456.0 L220.4 455.7 L222.0 448.5 L223.6 455.7 L225.0 455.7 L229.0 456.0 L233.0 456.0 L237.0 456.0 L241.0 455.6 L245.0 455.5 L249.0 455.5 L253.0 455.5 L257.0 455.5 L261.0 455.8 L263.0 455.7 L265.0 452.0 L267.0 455.7 L272.4 455.7 L274.0 448.8 L275.6 455.7 L277.0 456.0 L281.0 455.9 L285.0 455.7 L289.0 455.8 L293.0 455.9 L297.0 455.4 L301.0 455.8 L305.0 456.0 L309.0 455.9 L313.0 455.9 L317.0 455.7 L321.0 455.5 L325.0 455.9 L329.0 455.6 L333.0 455.9 L337.0 456.0 L341.0 455.6 L345.0 455.6 L349.0 456.0 L353.0 455.9 L357.0 455.5 L361.0 455.4 L365.0 455.5 L369.0 456.0 L373.0 455.9 L377.0 455.5 L381.0 455.9 L385.0 456.0 L389.0 455.8 L393.0 455.6 L397.0 455.7 L401.0 455.4 L405.0 455.4 L409.0 456.0 L413.0 455.8 L417.0 455.7 L421.0 456.0 L425.0 455.7 L429.0 456.0 L433.0 455.9 L437.0 455.5 L441.0 455.5 L445.0 455.6 L449.0 455.5 L453.0 455.8 L457.0 455.5 L461.0 455.6 L465.0 455.4 L469.0 456.0 L473.0 455.6 L477.8 455.2 L479.6 436.7 L481.4 455.2 L489.9 455.2 L491.7 434.8 L493.5 455.2 L502.2 455.2 L504.0 435.2 L505.8 455.2 L514.2 455.2 L516.0 433.6 L517.8 455.2 L525.9 455.2 L527.7 435.6 L529.5 455.2 L531.0 455.0 L535.0 455.1 L539.0 455.3 L543.0 454.9 L547.0 455.3 L551.0 455.0 L555.0 455.0 L559.0 455.0 L563.0 454.7 L567.0 455.0 L572.0 455.0 L573.8 424.0 L575.6 455.0 L577.0 454.3 L581.0 454.2 L585.0 454.7 L589.0 454.3 L593.0 454.5 L597.0 454.7 L601.0 454.5 L605.0 454.4 L609.0 454.5 L613.0 454.5 L617.0 454.7 L621.0 454.2 L625.0 454.5 L629.0 454.3 L633.0 454.3 L637.0 454.7 L641.0 454.5 L645.0 454.5 L649.0 454.7 L653.0 454.8 L657.0 454.5 L661.0 454.6 L665.0 454.5 L669.0 454.5 L673.0 454.6 L677.0 454.5 L679.2 454.5 L680.8 427.5 L682.4 454.5 L684.4 454.5 L686.0 443.7 L687.6 454.5 L688.4 454.5 L690.0 443.7 L691.6 454.5 L692.4 454.5 L694.0 443.7 L695.6 454.5 L696.4 454.5 L698.0 443.7 L699.6 454.5 L700.4 454.5 L702.0 443.7 L703.6 454.5 L705.0 454.3 L709.0 454.3 L713.0 454.6 L717.0 454.4 L721.0 454.5 L725.0 454.6 L729.0 454.2 L730.8 454.0 L731.5 432.7 L737.0 413.7 L742.0 410.2 L757.5 403.3 L758.0 403.3 L758.2 454.7 L760.0 455.3 L764.0 455.6 L768.0 455.5 L772.0 455.0 L776.0 455.0 L780.0 455.3 L784.0 455.0 L788.0 455.1 L792.0 455.0 L796.0 455.4 L800.0 455.5 L804.0 455.6 L808.0 455.1 L812.0 455.5 L816.0 455.4 L821.3 455.3 L822.9 428.0 L824.5 455.3 L826.0 455.1 L830.0 455.6 L834.0 455.6 L838.0 455.1 L842.0 455.6 L846.0 455.2 L850.0 455.3 L855.0 455.0 L856.0 434.7 L868.0 434.7 L869.0 454.0 L870.0 454.0 L871.5 435.0 L873.0 454.0 L877.5 454.0 L879.0 436.0 L880.5 454.0 L882.0 455.1 L886.0 455.0 L890.0 454.6 L894.0 454.8 L898.0 454.8 L900.1 454.8 L901.7 425.6 L903.3 454.8 L906.0 454.5 L911.0 454.0 L912.8 454.0 L914.4 427.3 L916.0 454.0 L920.0 454.0 L931.0 453.5 L937.3 452.0 L938.8 427.3 L940.3 452.0 L942.0 451.0 L945.0 452.0 L947.3 450.0 L948.8 429.7 L950.3 450.0 L955.6 449.0 L957.0 430.0 L958.4 449.0 L959.6 448.0 L961.0 430.0 L962.4 448.0 L965.6 447.0 L967.0 430.0 L968.4 447.0 L969.1 447.0 L970.5 428.0 L971.9 447.0 L975.0 454.0 L985.0 454.0 L1000.0 454.0 L1020.0 454.0 L1040.0 454.0 L1052.0 454.0 L1053.0 440.0 L1060.0 440.0 L1066.0 434.0 L1071.0 440.0 L1076.0 441.0 L1080.0 434.7 L1090.0 434.7 L1091.0 454.0 L1122.0 454.0 L1123.0 454.0 L1124.5 427.0 L1126.0 454.0 L1131.7 454.0 L1133.2 427.0 L1134.7 454.0 L1140.0 454.0 L1150.0 454.0 L1152.7 454.0 L1154.3 434.9 L1155.9 454.0 L1160.0 454.0 L1163.0 434.9 L1167.0 434.9 L1168.5 454.0 L1217.0 453.0 L1217.8 452.0 L1219.0 431.0 L1220.2 452.0 L1225.0 451.0 L1232.0 448.0 L1244.0 448.0 L1246.0 454.0 L1278.0 454.0 L1279.0 451.6 L1285.0 451.6 L1286.0 454.0 L1290.0 454.0 L1290.6 450.5 L1296.0 450.5 L1297.0 454.0 L1299.0 452.0 L1301.0 454.0 L1305.0 454.1 L1309.0 454.0 L1313.0 454.1 L1317.0 454.4 L1321.0 453.9 L1325.0 454.2 L1329.0 454.2 L1333.0 453.9 L1337.0 454.1 L1341.0 454.3 L1345.0 454.2 L1349.0 453.9 L1353.0 454.5 L1357.0 454.4 L1361.0 454.5 L1362.5 454.2 L1364.2 430.2 L1365.9 454.2 L1375.5 454.2 L1377.2 427.3 L1378.9 454.2 L1389.6 454.2 L1391.3 427.7 L1393.0 454.2 L1396.9 454.2 L1398.6 443.4 L1400.3 454.2 L1412.6 454.2 L1414.3 425.3 L1416.0 454.2 L1418.1 454.2 L1419.8 427.3 L1421.5 454.2 L1423.0 454.2 L1424.0 450.3 L1435.0 450.3 L1437.0 454.2 L1444.0 454.2 L1444.8 450.3 L1463.4 450.3 L1465.0 454.2 L1467.2 454.2 L1468.9 426.7 L1470.6 454.2 L1472.0 454.1 L1476.0 454.2 L1480.0 454.1 L1484.0 454.6 L1488.0 454.2 L1492.0 454.1 L1496.0 454.3 L1500.0 454.7 L1504.0 454.6 L1508.0 454.2 L1512.0 454.2 L1516.0 454.7 L1520.0 454.4 L1524.0 454.5 L1528.0 454.1 L1532.0 454.1 L1536.0 454.5 L1540.0 454.3 L1544.0 454.1 L1548.0 454.7 L1552.0 454.5 L1556.0 454.6 L1560.0 454.1 L1564.0 454.6 L1568.0 454.1 L1572.0 454.7 L1576.0 454.4 L1580.0 454.3 L1584.0 454.4 L1588.0 454.7 L1592.0 454.2 L1596.0 454.1 L1600.0 454.4 L1604.0 454.2 L1608.0 454.1 L1612.0 454.2 L1616.0 454.1 L1620.0 454.2 L1624.0 454.3 L1628.0 454.3 L1632.0 454.6 L1636.0 454.3 L1640.0 454.4 L1644.0 454.2 L1648.0 454.3 L1650.3 454.2" stroke="#F59a45" stroke-width="1.55" fill="none" stroke-linejoin="round"/>
<path d="M75.4 458.3 L83.4 458.4 L91.4 458.3 L99.4 458.6 L107.4 458.5 L115.4 458.4 L123.4 458.5 L131.4 458.7 L139.4 458.3 L147.4 458.6 L155.4 458.5 L163.4 458.5 L171.4 458.6 L179.4 458.5 L187.4 458.5 L195.4 458.6 L203.4 458.7 L211.4 458.4 L219.4 458.6 L227.4 458.6 L235.4 458.6 L243.4 458.5 L251.4 458.4 L259.4 458.3 L267.4 458.4 L275.4 458.3 L283.4 458.6 L291.4 458.4 L299.4 458.4 L307.4 458.3 L315.4 458.6 L323.4 458.6 L331.4 458.6 L339.4 458.4 L347.4 458.4 L355.4 458.4 L363.4 458.5 L371.4 458.4 L379.4 458.5 L387.4 458.4 L395.4 458.7 L403.4 458.7 L411.4 458.5 L419.4 458.4 L427.4 458.7 L435.4 458.4 L443.4 458.4 L451.4 458.3 L459.4 458.5 L467.4 458.5 L475.4 458.5 L483.4 458.4 L491.4 458.5 L499.4 458.3 L507.4 458.4 L515.4 458.3 L523.4 458.5 L531.4 458.3 L539.4 458.3 L543.0 458.5 L544.5 454.3 L561.8 454.3 L563.0 458.5 L566.0 458.1 L574.0 458.1 L582.0 458.2 L590.0 458.2 L598.0 458.3 L606.0 458.3 L614.0 458.3 L622.0 458.4 L630.0 458.2 L638.0 458.1 L646.0 458.4 L654.0 458.1 L662.0 458.3 L670.0 458.3 L678.0 458.0 L686.0 458.3 L694.0 458.4 L702.0 458.3 L710.0 458.3 L718.0 458.3 L726.0 458.1 L734.0 458.2 L737.5 457.0 L738.0 413.7 L742.0 410.2 L757.5 403.3 L758.0 403.3 L758.2 449.5 L775.0 448.5 L791.0 445.5 L798.3 439.7 L806.6 445.5 L821.6 433.0 L825.7 436.4 L829.0 430.6 L833.0 436.4 L840.0 434.4 L859.8 434.7 L868.0 443.0 L876.5 445.5 L889.7 453.9 L896.4 453.0 L906.4 438.0 L918.0 420.6 L923.0 408.0 L924.0 392.0 L925.0 375.0 L953.0 375.0 L953.6 395.7 L956.6 413.0 L957.5 402.0 L959.5 418.0 L961.6 420.0 L962.6 440.0 L966.6 430.0 L968.3 450.0 L971.6 438.0 L975.0 454.7 L975.7 444.7 L984.9 443.0 L988.0 448.0 L998.2 446.4 L1001.5 453.0 L1009.8 453.0 L1018.0 443.0 L1021.5 448.0 L1031.4 448.0 L1033.0 444.7 L1039.8 453.0 L1046.4 448.0 L1053.0 453.0 L1054.7 441.4 L1063.0 439.7 L1068.0 446.4 L1071.3 448.0 L1076.3 448.0 L1079.6 436.4 L1089.6 441.4 L1091.3 453.9 L1108.0 453.9 L1112.9 436.4 L1116.2 453.9 L1130.0 452.0 L1134.0 448.0 L1138.0 453.0 L1142.0 447.0 L1145.0 453.0 L1152.0 452.0 L1155.0 440.0 L1158.0 453.0 L1164.0 452.0 L1166.0 442.0 L1169.0 453.0 L1193.0 452.0 L1195.0 443.0 L1197.0 454.0 L1199.0 443.0 L1201.0 453.0 L1203.0 442.0 L1205.0 452.0 L1207.0 444.0 L1209.0 453.0 L1211.0 443.0 L1213.0 452.0 L1215.0 444.0 L1217.0 453.0 L1219.0 424.0 L1220.5 437.0 L1225.0 436.6 L1227.0 449.0 L1232.0 448.0 L1244.0 448.0 L1245.5 454.8 L1300.0 455.3 L1320.0 455.3 L1322.0 454.6 L1340.6 454.6 L1342.0 458.5 L1345.0 458.5 L1353.0 458.6 L1361.0 458.6 L1362.5 458.5 L1364.0 463.0 L1365.5 458.5 L1370.0 458.6 L1378.0 458.5 L1386.0 458.7 L1394.0 458.6 L1402.0 458.6 L1410.0 458.4 L1418.0 458.3 L1426.0 458.4 L1434.0 458.4 L1442.0 458.3 L1450.0 458.6 L1458.0 458.5 L1466.0 458.6 L1474.0 458.6 L1482.0 458.6 L1490.0 458.5 L1498.0 458.3 L1506.0 458.6 L1514.0 458.6 L1522.0 458.5 L1530.0 458.5 L1538.0 458.6 L1546.0 458.3 L1554.0 458.6 L1562.0 458.4 L1570.0 458.3 L1578.0 458.4 L1586.0 458.6 L1594.0 458.4 L1602.0 458.6 L1610.0 458.7 L1618.0 458.5 L1626.0 458.5 L1634.0 458.5 L1642.0 458.6 L1650.0 458.6 L1650.3 458.5" stroke="#5794F2" stroke-width="1.55" fill="none" stroke-linejoin="round"/>
<path d="M75.4 458.4 L81.4 458.3 L87.4 458.8 L93.4 458.2 L99.4 458.6 L105.4 458.5 L111.4 458.2 L117.4 458.6 L123.4 458.1 L129.4 458.5 L135.4 458.2 L141.4 458.2 L147.4 458.5 L153.4 458.9 L159.4 458.2 L165.4 458.3 L171.4 458.7 L177.4 459.0 L183.4 458.7 L189.4 458.5 L195.4 459.1 L201.4 458.1 L207.4 459.0 L213.4 458.4 L219.4 458.2 L225.4 458.2 L231.4 458.4 L237.4 458.9 L243.4 458.3 L249.4 458.7 L255.4 458.7 L261.4 458.5 L267.4 458.6 L273.4 458.2 L279.4 458.2 L285.4 458.3 L291.4 458.8 L297.4 458.5 L303.4 458.4 L309.4 458.7 L315.4 458.6 L321.4 458.4 L327.4 458.9 L333.4 458.8 L339.4 458.3 L345.4 458.7 L351.4 458.6 L357.4 459.0 L363.4 458.8 L369.4 458.4 L375.4 459.1 L381.4 458.2 L387.4 458.5 L393.4 458.9 L399.4 458.3 L405.4 458.6 L411.4 458.1 L417.4 458.8 L423.4 458.9 L429.4 458.7 L435.4 459.0 L441.4 458.4 L447.4 458.8 L453.4 458.7 L459.4 458.7 L465.4 458.6 L471.4 458.9 L477.4 459.0 L483.4 458.6 L489.4 458.8 L495.4 458.2 L501.4 458.8 L507.4 458.7 L513.4 459.1 L519.4 458.9 L525.4 458.4 L531.4 458.5 L537.4 458.8 L543.4 458.1 L549.4 458.6 L555.4 458.3 L561.4 458.2 L567.4 458.2 L573.4 458.9 L579.4 458.2 L585.4 458.3 L591.4 458.5 L595.0 458.7 L630.0 457.5 L665.0 455.9 L700.0 455.5 L730.0 454.1 L752.0 447.2 L759.0 449.5 L775.0 448.5 L791.0 445.5 L798.3 439.7 L806.6 445.5 L821.6 433.0 L825.7 436.4 L829.0 430.6 L833.0 436.4 L840.0 434.4 L859.8 434.7 L868.0 443.0 L876.5 445.5 L889.7 453.9 L896.4 453.0 L906.4 438.0 L918.0 420.6 L923.0 408.0 L924.0 392.0 L930.0 360.0 L945.0 340.0 L960.0 350.0 L968.0 390.0 L969.0 426.0 L971.6 359.0 L973.2 358.3 L975.0 424.8 L979.0 403.0 L982.9 349.0 L986.5 408.0 L988.2 411.5 L989.5 383.0 L990.7 409.8 L993.7 349.0 L997.4 428.0 L1000.2 363.0 L1002.3 380.0 L1004.8 364.0 L1006.8 425.6 L1009.8 364.0 L1016.5 368.0 L1019.8 430.6 L1021.0 369.0 L1033.0 374.0 L1034.8 390.0 L1036.4 434.0 L1046.4 435.6 L1056.4 436.4 L1063.0 439.7 L1073.0 436.4 L1082.0 430.6 L1086.3 438.0 L1094.6 439.7 L1100.4 417.3 L1103.8 436.4 L1108.7 434.7 L1111.6 402.3 L1114.6 433.0 L1122.9 448.0 L1130.0 445.9 L1134.6 447.0 L1142.7 442.4 L1145.6 437.8 L1146.8 412.4 L1147.9 433.0 L1149.0 410.6 L1150.8 419.3 L1152.5 442.4 L1155.4 445.3 L1160.0 443.0 L1164.7 444.7 L1170.4 441.2 L1172.8 422.7 L1175.3 419.3 L1177.4 432.0 L1179.7 442.4 L1183.7 421.6 L1186.0 425.6 L1187.8 422.2 L1190.0 424.0 L1191.8 442.4 L1199.3 443.0 L1200.5 426.8 L1217.8 430.8 L1219.5 434.3 L1222.4 432.6 L1234.0 437.8 L1244.4 440.7 L1246.1 444.7 L1250.2 447.0 L1259.4 453.9 L1266.3 451.6 L1271.0 455.1 L1284.8 458.6 L1290.0 459.0 L1296.0 458.2 L1302.0 458.5 L1308.0 458.6 L1314.0 459.0 L1320.0 458.9 L1326.0 459.0 L1332.0 458.4 L1338.0 458.5 L1344.0 458.5 L1350.0 459.0 L1356.0 459.1 L1362.0 458.3 L1368.0 458.3 L1374.0 458.3 L1380.0 458.3 L1386.0 458.6 L1392.0 458.7 L1398.0 458.4 L1404.0 458.1 L1410.0 458.5 L1416.0 458.5 L1422.0 458.7 L1428.0 459.1 L1434.0 458.8 L1440.0 458.6 L1446.0 458.7 L1452.0 458.8 L1458.0 458.2 L1464.0 459.0 L1470.0 458.9 L1476.0 459.0 L1482.0 458.9 L1488.0 458.5 L1494.0 458.5 L1500.0 458.2 L1506.0 458.7 L1512.0 458.2 L1518.0 458.2 L1524.0 458.3 L1530.0 458.3 L1536.0 458.4 L1542.0 458.2 L1548.0 458.1 L1554.0 458.3 L1560.0 458.2 L1566.0 458.5 L1572.0 458.1 L1578.0 459.0 L1584.0 458.7 L1590.0 458.2 L1596.0 458.4 L1602.0 458.4 L1608.0 458.5 L1614.0 458.2 L1620.0 458.9 L1626.0 459.1 L1632.0 458.6 L1638.0 458.6 L1644.0 458.2 L1650.0 458.2 L1650.3 458.6" stroke="#F2DC40" stroke-width="1.55" fill="none" stroke-linejoin="round"/>
<path d="M75.3 325.2 L84.3 325.2 M92.2 327.6 L100.8 327.6 M110.3 327.5 L112.5 329.7 L117.8 329.7 M126.8 329.4 L133.5 329.6 L134.9 330.9 M143.6 332.1 L151.9 332.1 M160.1 334.2 L168.7 334.2 M177.4 335.7 L178.5 336.6 L185.3 336.6 M194.4 336.3 L199.5 336.5 L201.9 339.0 M211.2 338.9 L219.7 338.9 M227.7 341.1 L236.4 341.1 M244.2 343.2 L252.9 343.2 M261.5 344.6 L262.5 345.6 L269.8 345.6 M278.8 345.5 L281.5 348.0 L286.3 348.0 M295.3 347.7 L302.0 348.0 L303.6 349.1 M312.1 350.0 L320.7 350.2 M329.0 352.5 L337.5 352.5 M346.5 352.0 L351.5 352.3 L353.8 354.7 M363.0 354.7 L371.8 354.7 M379.9 357.0 L388.6 357.0 M398.0 356.5 L400.5 359.2 L405.0 359.2 M414.1 359.2 L422.8 359.2 M431.0 361.5 L439.7 361.5 M448.2 362.5 L449.5 363.7 L456.5 363.7 M465.5 363.7 L474.2 363.7 M482.5 365.8 L486.0 366.0 L489.2 368.5 M497.5 370.0 L506.0 370.8 M514.0 372.3 L518.0 372.5 L521.0 375.3 M529.5 377.2 L537.6 377.2 M545.8 379.5 L554.6 379.5 M563.5 379.6 L569.0 379.8 L571.1 381.3 M579.4 384.3 L587.7 384.3 M596.0 385.5 L597.5 386.3 L604.5 386.3 M613.7 387.0 L615.5 388.5 L620.4 388.5 M630.5 388.5 L638.8 388.5 M647.2 391.0 L655.6 391.0 M664.8 391.0 L673.2 391.0 M683.2 391.0 L686.0 391.5 L690.0 393.5 M696.6 397.7 L702.5 397.8 L703.3 399.8 M713.4 399.8 L721.8 399.8 M731.0 399.3 L736.0 406.9 M740.2 413.6 L749.4 413.6 M758.6 413.5 L761.5 413.3 L762.8 410.6 L765.7 410.5 M775.4 411.0 L777.5 410.8 L778.8 408.8 L782.7 408.7 M791.4 408.4 L792.8 406.3 L798.7 406.2 M806.0 402.8 L813.0 402.6 L814.0 401.0 M820.5 397.7 L823.0 397.5 L824.5 396.6 L828.0 396.5 M837.0 392.0 L845.0 388.0 M972.0 282.0 L973.5 278.2 L979.2 277.7 M989.3 277.7 L997.4 277.7 M1007.0 277.7 L1015.2 277.7 M1024.7 277.7 L1033.8 277.7 M1042.9 277.7 L1052.0 277.7 M1061.0 277.7 L1066.0 278.0 L1068.2 280.1 M1077.3 280.1 L1086.4 280.1 M1095.5 280.1 L1104.6 280.1 M1113.7 280.1 L1122.8 280.1 M1131.9 280.1 L1134.5 282.5 L1139.0 282.5 M1145.0 277.7 L1153.0 277.7 M1163.2 278.0 L1165.5 280.1 L1169.3 280.1 M1179.4 280.1 L1187.5 280.1 M1197.6 280.1 L1205.7 280.1 M1215.8 280.1 L1223.8 280.1 M1232.0 277.7 L1241.0 277.7 M1250.2 277.7 L1258.3 277.7 M1268.3 277.7 L1276.4 277.7 M1284.5 280.0 L1291.5 280.2 L1292.6 281.2 M1301.0 282.6 L1307.5 282.8 L1309.2 283.6 M1317.4 284.6 L1320.0 287.3 L1324.6 287.3 M1333.8 287.3 L1343.0 287.3 M1352.3 286.9 L1354.5 289.4 L1359.5 289.4 M1367.7 291.4 L1376.3 291.4 M1384.0 293.9 L1391.0 294.0 L1392.3 294.9 M1400.5 295.9 L1405.5 296.2 L1407.7 298.6 M1415.9 300.6 L1424.5 300.6 M1432.3 302.7 L1434.5 305.4 L1439.9 305.4 M1448.7 305.4 L1450.5 307.4 L1456.3 307.4 M1464.0 309.9 L1469.5 310.0 L1471.2 311.5 M1480.5 311.9 L1489.7 311.9 M1497.3 314.0 L1506.1 314.0 M1514.3 315.0 L1516.0 316.6 L1522.5 316.6 M1531.7 316.0 L1534.0 318.7 L1538.9 318.7 M1548.2 318.7 L1557.4 318.7 M1564.6 321.1 L1573.8 321.1 M1581.4 323.2 L1590.8 323.2 M1598.4 325.2 L1607.2 325.2 M1615.8 325.2 L1622.5 325.5 L1624.0 327.3 M1632.7 327.7 L1641.9 327.7" stroke="#3170d2" stroke-width="1.5" fill="none" stroke-linejoin="round"/>
<rect x="33.7" y="535.1" width="10.0" height="2.6" rx="0.5" fill="#58a84d"/>
<text x="47.8" y="539.8" font-size="11.3" font-weight="normal" fill="#d8d9da" text-anchor="start" textLength="17.7" lengthAdjust="spacingAndGlyphs" stroke="#d8d9da" stroke-width="0.25" >Grid</text>
<text x="71.8" y="539.8" font-size="11.3" font-weight="normal" fill="#d8d9da" text-anchor="start" textLength="67.7" lengthAdjust="spacingAndGlyphs" stroke="#d8d9da" stroke-width="0.25" >Current: 59.0 W</text>
<rect x="148.2" y="535.1" width="10.9" height="2.6" rx="0.5" fill="#5794F2"/>
<text x="162.2" y="539.8" font-size="11.3" font-weight="normal" fill="#d8d9da" text-anchor="start" textLength="31.2" lengthAdjust="spacingAndGlyphs" stroke="#d8d9da" stroke-width="0.25" >Battery</text>
<text x="199.7" y="539.8" font-size="11.3" font-weight="normal" fill="#d8d9da" text-anchor="start" textLength="76.4" lengthAdjust="spacingAndGlyphs" stroke="#d8d9da" stroke-width="0.25" >Current: -418.0 W</text>
<rect x="284.8" y="535.1" width="10.3" height="2.6" rx="0.5" fill="#F59a45"/>
<text x="298.9" y="539.8" font-size="11.3" font-weight="normal" fill="#d8d9da" text-anchor="start" textLength="59.2" lengthAdjust="spacingAndGlyphs" stroke="#d8d9da" stroke-width="0.25" >Consumption</text>
<text x="363.4" y="539.8" font-size="11.3" font-weight="normal" fill="#d8d9da" text-anchor="start" textLength="74.0" lengthAdjust="spacingAndGlyphs" stroke="#d8d9da" stroke-width="0.25" >Current: 544.0 W</text>
<rect x="446.7" y="535.1" width="10.3" height="2.6" rx="0.5" fill="#F2DC40"/>
<text x="460.7" y="539.8" font-size="11.3" font-weight="normal" fill="#d8d9da" text-anchor="start" textLength="22.2" lengthAdjust="spacingAndGlyphs" stroke="#d8d9da" stroke-width="0.25" >Solar</text>
<text x="488.8" y="539.8" font-size="11.3" font-weight="normal" fill="#d8d9da" text-anchor="start" textLength="67.4" lengthAdjust="spacingAndGlyphs" stroke="#d8d9da" stroke-width="0.25" >Current: 68.0 W</text>
<rect x="1565.9" y="535.0" width="10.5" height="2.6" rx="0.5" fill="#3274D9"/>
<text x="1580.3" y="539.8" font-size="11.3" font-weight="normal" fill="#d8d9da" text-anchor="start" textLength="65.1" lengthAdjust="spacingAndGlyphs" stroke="#d8d9da" stroke-width="0.25" >Battery Charge</text>
<text x="1650.9" y="539.8" font-size="11.3" font-weight="normal" fill="#d8d9da" text-anchor="start" textLength="64.0" lengthAdjust="spacingAndGlyphs" stroke="#d8d9da" stroke-width="0.25" >Current: 51.0%</text>
<path d="M1713.8 549.6H1718.2V545.2" stroke="#62636b" stroke-width="1.2" fill="none"/>
<rect x="811" y="280" width="160" height="115.5" rx="4" fill="#141414"/>
<text x="890.8" y="298.6" font-size="12.4" font-weight="bold" fill="#d8d9da" text-anchor="middle" textLength="101.9" lengthAdjust="spacingAndGlyphs" >2022-10-13 10:51:57</text>
<rect x="822.0" y="311.9" width="8.4" height="2.4" rx="0.5" fill="#3274D9"/>
<text x="833.6" y="316.9" font-size="11.3" font-weight="normal" fill="#d8d9da" text-anchor="start" textLength="73.2" lengthAdjust="spacingAndGlyphs" stroke="#d8d9da" stroke-width="0.25" >Battery Charge:</text>
<text x="961.8" y="316.9" font-size="11.3" font-weight="bold" fill="#d8d9da" text-anchor="end" textLength="29.3" lengthAdjust="spacingAndGlyphs" >42.0%</text>
<rect x="822.0" y="328.0" width="8.4" height="2.4" rx="0.5" fill="#58a84d"/>
<text x="833.6" y="333.0" font-size="11.3" font-weight="normal" fill="#d8d9da" text-anchor="start" textLength="21.6" lengthAdjust="spacingAndGlyphs" stroke="#d8d9da" stroke-width="0.25" >Grid:</text>
<text x="961.8" y="333.0" font-size="11.3" font-weight="bold" fill="#d8d9da" text-anchor="end" textLength="33.7" lengthAdjust="spacingAndGlyphs" >57.0 W</text>
<rect x="822.0" y="344.1" width="8.4" height="2.4" rx="0.5" fill="#F59a45"/>
<text x="833.6" y="349.1" font-size="11.3" font-weight="normal" fill="#d8d9da" text-anchor="start" textLength="66.7" lengthAdjust="spacingAndGlyphs" stroke="#d8d9da" stroke-width="0.25" >Consumption:</text>
<text x="961.8" y="349.1" font-size="11.3" font-weight="bold" fill="#d8d9da" text-anchor="end" textLength="39.8" lengthAdjust="spacingAndGlyphs" >471.0 W</text>
<rect x="822.0" y="360.2" width="8.4" height="2.4" rx="0.5" fill="#5794F2"/>
<text x="833.6" y="365.2" font-size="11.3" font-weight="normal" fill="#d8d9da" text-anchor="start" textLength="36.1" lengthAdjust="spacingAndGlyphs" stroke="#d8d9da" stroke-width="0.25" >Battery:</text>
<text x="961.8" y="365.2" font-size="11.3" font-weight="bold" fill="#d8d9da" text-anchor="end" textLength="39.8" lengthAdjust="spacingAndGlyphs" >803.0 W</text>
<rect x="822.0" y="376.3" width="8.4" height="2.4" rx="0.5" fill="#F2DC40"/>
<text x="833.6" y="381.3" font-size="11.3" font-weight="normal" fill="#d8d9da" text-anchor="start" textLength="26.6" lengthAdjust="spacingAndGlyphs" stroke="#d8d9da" stroke-width="0.25" >Solar:</text>
<text x="961.8" y="381.3" font-size="11.3" font-weight="bold" fill="#d8d9da" text-anchor="end" textLength="32.9" lengthAdjust="spacingAndGlyphs" >1.3 kW</text>
<rect x="17.8" y="562.8" width="846.2" height="277.2" rx="2.5" fill="#212124"/>
<text x="440.7" y="579.0" font-size="12.8" font-weight="bold" fill="#d8d9da" text-anchor="middle" textLength="122.1" lengthAdjust="spacingAndGlyphs" >Yearly Solar Production</text>
<path d="M64.5 603.5H847" stroke="#3b3b3e" stroke-width="1"/>
<path d="M64.5 634.5H847" stroke="#3b3b3e" stroke-width="1"/>
<path d="M64.5 665.5H847" stroke="#3b3b3e" stroke-width="1"/>
<path d="M64.5 697.5H847" stroke="#3b3b3e" stroke-width="1"/>
<path d="M64.5 728.5H847" stroke="#3b3b3e" stroke-width="1"/>
<path d="M64.5 759.5H847" stroke="#3b3b3e" stroke-width="1"/>
<path d="M64.5 790.5H847" stroke="#3b3b3e" stroke-width="1"/>
<path d="M64.5 603.0V791.0" stroke="#3b3b3e" stroke-width="1"/>
<text x="64.5" y="805.2" font-size="10.2" font-weight="normal" fill="#d8d9da" text-anchor="middle" textLength="13.5" lengthAdjust="spacingAndGlyphs" stroke="#d8d9da" stroke-width="0.25" >1/1</text>
<path d="M131.5 603.0V791.0" stroke="#3b3b3e" stroke-width="1"/>
<text x="130.8" y="805.2" font-size="10.2" font-weight="normal" fill="#d8d9da" text-anchor="middle" textLength="13.5" lengthAdjust="spacingAndGlyphs" stroke="#d8d9da" stroke-width="0.25" >2/1</text>
<path d="M191.5 603.0V791.0" stroke="#3b3b3e" stroke-width="1"/>
<text x="190.8" y="805.2" font-size="10.2" font-weight="normal" fill="#d8d9da" text-anchor="middle" textLength="13.5" lengthAdjust="spacingAndGlyphs" stroke="#d8d9da" stroke-width="0.25" >3/1</text>
<path d="M257.5 603.0V791.0" stroke="#3b3b3e" stroke-width="1"/>
<text x="257.1" y="805.2" font-size="10.2" font-weight="normal" fill="#d8d9da" text-anchor="middle" textLength="13.5" lengthAdjust="spacingAndGlyphs" stroke="#d8d9da" stroke-width="0.25" >4/1</text>
<path d="M321.5 603.0V791.0" stroke="#3b3b3e" stroke-width="1"/>
<text x="321.3" y="805.2" font-size="10.2" font-weight="normal" fill="#d8d9da" text-anchor="middle" textLength="13.5" lengthAdjust="spacingAndGlyphs" stroke="#d8d9da" stroke-width="0.25" >5/1</text>
<path d="M388.5 603.0V791.0" stroke="#3b3b3e" stroke-width="1"/>
<text x="387.6" y="805.2" font-size="10.2" font-weight="normal" fill="#d8d9da" text-anchor="middle" textLength="13.5" lengthAdjust="spacingAndGlyphs" stroke="#d8d9da" stroke-width="0.25" >6/1</text>
<path d="M452.5 603.0V791.0" stroke="#3b3b3e" stroke-width="1"/>
<text x="451.8" y="805.2" font-size="10.2" font-weight="normal" fill="#d8d9da" text-anchor="middle" textLength="13.5" lengthAdjust="spacingAndGlyphs" stroke="#d8d9da" stroke-width="0.25" >7/1</text>
<path d="M518.5 603.0V791.0" stroke="#3b3b3e" stroke-width="1"/>
<text x="518.2" y="805.2" font-size="10.2" font-weight="normal" fill="#d8d9da" text-anchor="middle" textLength="13.5" lengthAdjust="spacingAndGlyphs" stroke="#d8d9da" stroke-width="0.25" >8/1</text>
<path d="M584.5 603.0V791.0" stroke="#3b3b3e" stroke-width="1"/>
<text x="584.5" y="805.2" font-size="10.2" font-weight="normal" fill="#d8d9da" text-anchor="middle" textLength="13.5" lengthAdjust="spacingAndGlyphs" stroke="#d8d9da" stroke-width="0.25" >9/1</text>
<path d="M649.5 603.0V791.0" stroke="#3b3b3e" stroke-width="1"/>
<text x="648.7" y="805.2" font-size="10.2" font-weight="normal" fill="#d8d9da" text-anchor="middle" textLength="19.0" lengthAdjust="spacingAndGlyphs" stroke="#d8d9da" stroke-width="0.25" >10/1</text>
<path d="M715.5 603.0V791.0" stroke="#3b3b3e" stroke-width="1"/>
<text x="715.1" y="805.2" font-size="10.2" font-weight="normal" fill="#d8d9da" text-anchor="middle" textLength="19.0" lengthAdjust="spacingAndGlyphs" stroke="#d8d9da" stroke-width="0.25" >11/1</text>
<path d="M779.5 603.0V791.0" stroke="#3b3b3e" stroke-width="1"/>
<text x="779.3" y="805.2" font-size="10.2" font-weight="normal" fill="#d8d9da" text-anchor="middle" textLength="19.0" lengthAdjust="spacingAndGlyphs" stroke="#d8d9da" stroke-width="0.25" >12/1</text>
<text x="59.8" y="606.3" font-size="10.2" font-weight="normal" fill="#d8d9da" text-anchor="end" textLength="32.5" lengthAdjust="spacingAndGlyphs" stroke="#d8d9da" stroke-width="0.25" >3.0 MW</text>
<text x="59.8" y="637.3" font-size="10.2" font-weight="normal" fill="#d8d9da" text-anchor="end" textLength="32.9" lengthAdjust="spacingAndGlyphs" stroke="#d8d9da" stroke-width="0.25" >2.5 MW</text>
<text x="59.8" y="668.3" font-size="10.2" font-weight="normal" fill="#d8d9da" text-anchor="end" textLength="32.9" lengthAdjust="spacingAndGlyphs" stroke="#d8d9da" stroke-width="0.25" >2.0 MW</text>
<text x="59.8" y="700.3" font-size="10.2" font-weight="normal" fill="#d8d9da" text-anchor="end" textLength="32.9" lengthAdjust="spacingAndGlyphs" stroke="#d8d9da" stroke-width="0.25" >1.5 MW</text>
<text x="59.8" y="731.3" font-size="10.2" font-weight="normal" fill="#d8d9da" text-anchor="end" textLength="32.9" lengthAdjust="spacingAndGlyphs" stroke="#d8d9da" stroke-width="0.25" >1.0 MW</text>
<text x="59.8" y="762.3" font-size="10.2" font-weight="normal" fill="#d8d9da" text-anchor="end" textLength="31.8" lengthAdjust="spacingAndGlyphs" stroke="#d8d9da" stroke-width="0.25" >500 kW</text>
<text x="59.8" y="793.3" font-size="10.2" font-weight="normal" fill="#d8d9da" text-anchor="end" textLength="21.3" lengthAdjust="spacingAndGlyphs" stroke="#d8d9da" stroke-width="0.25" >0 kW</text>
<rect x="191.2" y="772.7" width="43" height="18.3" fill="#73BF69"/>
<rect x="257.5" y="753.2" width="43" height="37.8" fill="#73BF69"/>
<rect x="321.7" y="753.2" width="43" height="37.8" fill="#73BF69"/>
<rect x="321.7" y="740.6" width="43" height="12.6" fill="#FADE2A"/>
<rect x="388.0" y="757.3" width="43" height="33.7" fill="#73BF69"/>
<rect x="388.0" y="629.0" width="43" height="128.3" fill="#FADE2A"/>
<rect x="452.2" y="758.2" width="43" height="32.8" fill="#73BF69"/>
<rect x="452.2" y="635.8" width="43" height="122.4" fill="#FADE2A"/>
<rect x="518.6" y="759.1" width="43" height="31.9" fill="#73BF69"/>
<rect x="518.6" y="658.2" width="43" height="100.9" fill="#FADE2A"/>
<rect x="584.9" y="759.4" width="43" height="31.6" fill="#73BF69"/>
<rect x="584.9" y="701.3" width="43" height="58.1" fill="#FADE2A"/>
<rect x="584.9" y="758.4" width="43" height="1.2" fill="#c8603a"/>
<rect x="649.1" y="775.9" width="43" height="15.1" fill="#73BF69"/>
<rect x="649.1" y="749.8" width="43" height="26.1" fill="#FADE2A"/>
<rect x="649.1" y="774.9" width="43" height="1.2" fill="#c8603a"/>
<rect x="34.2" y="822.0" width="10.7" height="2.6" rx="0.5" fill="#FADE2A"/>
<text x="48.5" y="827.0" font-size="11.3" font-weight="normal" fill="#d8d9da" text-anchor="start" textLength="34.3" lengthAdjust="spacingAndGlyphs" stroke="#d8d9da" stroke-width="0.25" >Feed_In</text>
<text x="88.6" y="827.0" font-size="11.3" font-weight="normal" fill="#d8d9da" text-anchor="start" textLength="71.6" lengthAdjust="spacingAndGlyphs" stroke="#d8d9da" stroke-width="0.25" >Total: 7.105 MW</text>
<rect x="169.4" y="822.0" width="10.4" height="2.6" rx="0.5" fill="#73BF69"/>
<text x="183.5" y="827.0" font-size="11.3" font-weight="normal" fill="#d8d9da" text-anchor="start" textLength="38.1" lengthAdjust="spacingAndGlyphs" stroke="#d8d9da" stroke-width="0.25" >Self_Use</text>
<text x="227.6" y="827.0" font-size="11.3" font-weight="normal" fill="#d8d9da" text-anchor="start" textLength="71.6" lengthAdjust="spacingAndGlyphs" stroke="#d8d9da" stroke-width="0.25" >Total: 3.798 MW</text>
<rect x="308.4" y="822.0" width="10.2" height="2.6" rx="0.5" fill="#F2495C"/>
<text x="322.7" y="827.0" font-size="11.3" font-weight="normal" fill="#d8d9da" text-anchor="start" textLength="45.2" lengthAdjust="spacingAndGlyphs" stroke="#d8d9da" stroke-width="0.25" >From_Grid</text>
<text x="373.7" y="827.0" font-size="11.3" font-weight="normal" fill="#d8d9da" text-anchor="start" textLength="54.1" lengthAdjust="spacingAndGlyphs" stroke="#d8d9da" stroke-width="0.25" >Total: 28 kW</text>
<path d="M858.1 837.4H862.5V833.0" stroke="#62636b" stroke-width="1.2" fill="none"/>
<rect x="875" y="563" width="846.5" height="277" rx="2.5" fill="#212124"/>
<text x="1297.8" y="579.0" font-size="12.8" font-weight="bold" fill="#d8d9da" text-anchor="middle" textLength="132.2" lengthAdjust="spacingAndGlyphs" >Monthly Solar Production</text>
<path d="M928.0 634.5H1701.2" stroke="#3b3b3e" stroke-width="1"/>
<path d="M928.0 673.5H1701.2" stroke="#3b3b3e" stroke-width="1"/>
<path d="M928.0 712.5H1701.2" stroke="#3b3b3e" stroke-width="1"/>
<path d="M928.0 751.5H1701.2" stroke="#3b3b3e" stroke-width="1"/>
<path d="M928.0 790.5H1701.2" stroke="#3b3b3e" stroke-width="1"/>
<path d="M928.5 603.0V791.0" stroke="#3b3b3e" stroke-width="1"/>
<text x="928.4" y="805.2" font-size="10.2" font-weight="normal" fill="#d8d9da" text-anchor="middle" textLength="19.5" lengthAdjust="spacingAndGlyphs" stroke="#d8d9da" stroke-width="0.25" >10/1</text>
<path d="M1003.5 603.0V791.0" stroke="#3b3b3e" stroke-width="1"/>
<text x="1003.1" y="805.2" font-size="10.2" font-weight="normal" fill="#d8d9da" text-anchor="middle" textLength="19.5" lengthAdjust="spacingAndGlyphs" stroke="#d8d9da" stroke-width="0.25" >10/4</text>
<path d="M1077.5 603.0V791.0" stroke="#3b3b3e" stroke-width="1"/>
<text x="1077.8" y="805.2" font-size="10.2" font-weight="normal" fill="#d8d9da" text-anchor="middle" textLength="19.5" lengthAdjust="spacingAndGlyphs" stroke="#d8d9da" stroke-width="0.25" >10/7</text>
<path d="M1152.5 603.0V791.0" stroke="#3b3b3e" stroke-width="1"/>
<text x="1152.5" y="805.2" font-size="10.2" font-weight="normal" fill="#d8d9da" text-anchor="middle" textLength="24.5" lengthAdjust="spacingAndGlyphs" stroke="#d8d9da" stroke-width="0.25" >10/10</text>
<path d="M1227.5 603.0V791.0" stroke="#3b3b3e" stroke-width="1"/>
<text x="1227.2" y="805.2" font-size="10.2" font-weight="normal" fill="#d8d9da" text-anchor="middle" textLength="24.5" lengthAdjust="spacingAndGlyphs" stroke="#d8d9da" stroke-width="0.25" >10/13</text>
<path d="M1301.5 603.0V791.0" stroke="#3b3b3e" stroke-width="1"/>
<text x="1301.9" y="805.2" font-size="10.2" font-weight="normal" fill="#d8d9da" text-anchor="middle" textLength="24.5" lengthAdjust="spacingAndGlyphs" stroke="#d8d9da" stroke-width="0.25" >10/16</text>
<path d="M1376.5 603.0V791.0" stroke="#3b3b3e" stroke-width="1"/>
<text x="1376.6" y="805.2" font-size="10.2" font-weight="normal" fill="#d8d9da" text-anchor="middle" textLength="24.5" lengthAdjust="spacingAndGlyphs" stroke="#d8d9da" stroke-width="0.25" >10/19</text>
<path d="M1451.5 603.0V791.0" stroke="#3b3b3e" stroke-width="1"/>
<text x="1451.3" y="805.2" font-size="10.2" font-weight="normal" fill="#d8d9da" text-anchor="middle" textLength="24.5" lengthAdjust="spacingAndGlyphs" stroke="#d8d9da" stroke-width="0.25" >10/22</text>
<path d="M1526.5 603.0V791.0" stroke="#3b3b3e" stroke-width="1"/>
<text x="1526.0" y="805.2" font-size="10.2" font-weight="normal" fill="#d8d9da" text-anchor="middle" textLength="24.5" lengthAdjust="spacingAndGlyphs" stroke="#d8d9da" stroke-width="0.25" >10/25</text>
<path d="M1600.5 603.0V791.0" stroke="#3b3b3e" stroke-width="1"/>
<text x="1600.7" y="805.2" font-size="10.2" font-weight="normal" fill="#d8d9da" text-anchor="middle" textLength="24.5" lengthAdjust="spacingAndGlyphs" stroke="#d8d9da" stroke-width="0.25" >10/28</text>
<path d="M1675.5 603.0V791.0" stroke="#3b3b3e" stroke-width="1"/>
<text x="1675.4" y="805.2" font-size="10.2" font-weight="normal" fill="#d8d9da" text-anchor="middle" textLength="24.5" lengthAdjust="spacingAndGlyphs" stroke="#d8d9da" stroke-width="0.25" >10/30</text>
<text x="923.9" y="637.3" font-size="10.2" font-weight="normal" fill="#d8d9da" text-anchor="end" textLength="40.4" lengthAdjust="spacingAndGlyphs" stroke="#d8d9da" stroke-width="0.25" >100.0 kW</text>
<text x="923.9" y="676.3" font-size="10.2" font-weight="normal" fill="#d8d9da" text-anchor="end" textLength="35.5" lengthAdjust="spacingAndGlyphs" stroke="#d8d9da" stroke-width="0.25" >75.0 kW</text>
<text x="923.9" y="715.3" font-size="10.2" font-weight="normal" fill="#d8d9da" text-anchor="end" textLength="35.5" lengthAdjust="spacingAndGlyphs" stroke="#d8d9da" stroke-width="0.25" >50.0 kW</text>
<text x="923.9" y="754.3" font-size="10.2" font-weight="normal" fill="#d8d9da" text-anchor="end" textLength="35.5" lengthAdjust="spacingAndGlyphs" stroke="#d8d9da" stroke-width="0.25" >25.0 kW</text>
<text x="923.9" y="793.3" font-size="10.2" font-weight="normal" fill="#d8d9da" text-anchor="end" textLength="21.9" lengthAdjust="spacingAndGlyphs" stroke="#d8d9da" stroke-width="0.25" >0 kW</text>
<rect x="930.8" y="760.9" width="17" height="30.1" fill="#73BF69"/>
<rect x="930.8" y="723.2" width="17" height="37.7" fill="#FADE2A"/>
<rect x="955.7" y="760.0" width="17" height="31.0" fill="#73BF69"/>
<rect x="955.7" y="693.6" width="17" height="66.4" fill="#FADE2A"/>
<rect x="980.6" y="760.0" width="17" height="31.0" fill="#73BF69"/>
<rect x="980.6" y="752.5" width="17" height="7.5" fill="#FADE2A"/>
<rect x="1005.5" y="763.6" width="17" height="27.4" fill="#73BF69"/>
<rect x="1005.5" y="734.0" width="17" height="29.6" fill="#FADE2A"/>
<rect x="1030.4" y="760.0" width="17" height="31.0" fill="#73BF69"/>
<rect x="1030.4" y="680.1" width="17" height="79.9" fill="#FADE2A"/>
<rect x="1055.3" y="742.6" width="17" height="48.4" fill="#73BF69"/>
<rect x="1055.3" y="680.4" width="17" height="62.2" fill="#FADE2A"/>
<rect x="1080.2" y="778.0" width="17" height="13.0" fill="#73BF69"/>
<rect x="1080.2" y="696.6" width="17" height="81.4" fill="#FADE2A"/>
<rect x="1105.1" y="763.2" width="17" height="27.8" fill="#73BF69"/>
<rect x="1105.1" y="690.4" width="17" height="72.8" fill="#FADE2A"/>
<rect x="1130.0" y="761.5" width="17" height="29.5" fill="#73BF69"/>
<rect x="1130.0" y="705.7" width="17" height="55.8" fill="#FADE2A"/>
<rect x="1154.9" y="752.1" width="17" height="38.9" fill="#73BF69"/>
<rect x="1154.9" y="691.5" width="17" height="60.6" fill="#FADE2A"/>
<rect x="1179.8" y="765.0" width="17" height="26.0" fill="#73BF69"/>
<rect x="1179.8" y="735.9" width="17" height="29.1" fill="#FADE2A"/>
<rect x="1204.7" y="768.4" width="17" height="22.6" fill="#73BF69"/>
<rect x="1204.7" y="741.7" width="17" height="26.7" fill="#FADE2A"/>
<rect x="1229.6" y="766.7" width="17" height="24.3" fill="#73BF69"/>
<rect x="1229.6" y="745.9" width="17" height="20.8" fill="#FADE2A"/>
<rect x="1254.5" y="785.8" width="17" height="5.2" fill="#73BF69"/>
<rect x="1254.5" y="785.1" width="17" height="0.7" fill="#FADE2A"/>
<rect x="891.5" y="822.2" width="9.9" height="2.6" rx="0.5" fill="#73BF69"/>
<text x="905.3" y="827.0" font-size="11.3" font-weight="normal" fill="#d8d9da" text-anchor="start" textLength="36.5" lengthAdjust="spacingAndGlyphs" stroke="#d8d9da" stroke-width="0.25" >Self Use</text>
<rect x="950.8" y="822.2" width="9.9" height="2.6" rx="0.5" fill="#FADE2A"/>
<text x="964.9" y="827.0" font-size="11.3" font-weight="normal" fill="#d8d9da" text-anchor="start" textLength="32.3" lengthAdjust="spacingAndGlyphs" stroke="#d8d9da" stroke-width="0.25" >Feed In</text>
<path d="M1714.6 837.4H1719.0V833.0" stroke="#62636b" stroke-width="1.2" fill="none"/>
<rect x="0" y="840" width="1731" height="2" fill="#111214"/>
</svg></body></html>
